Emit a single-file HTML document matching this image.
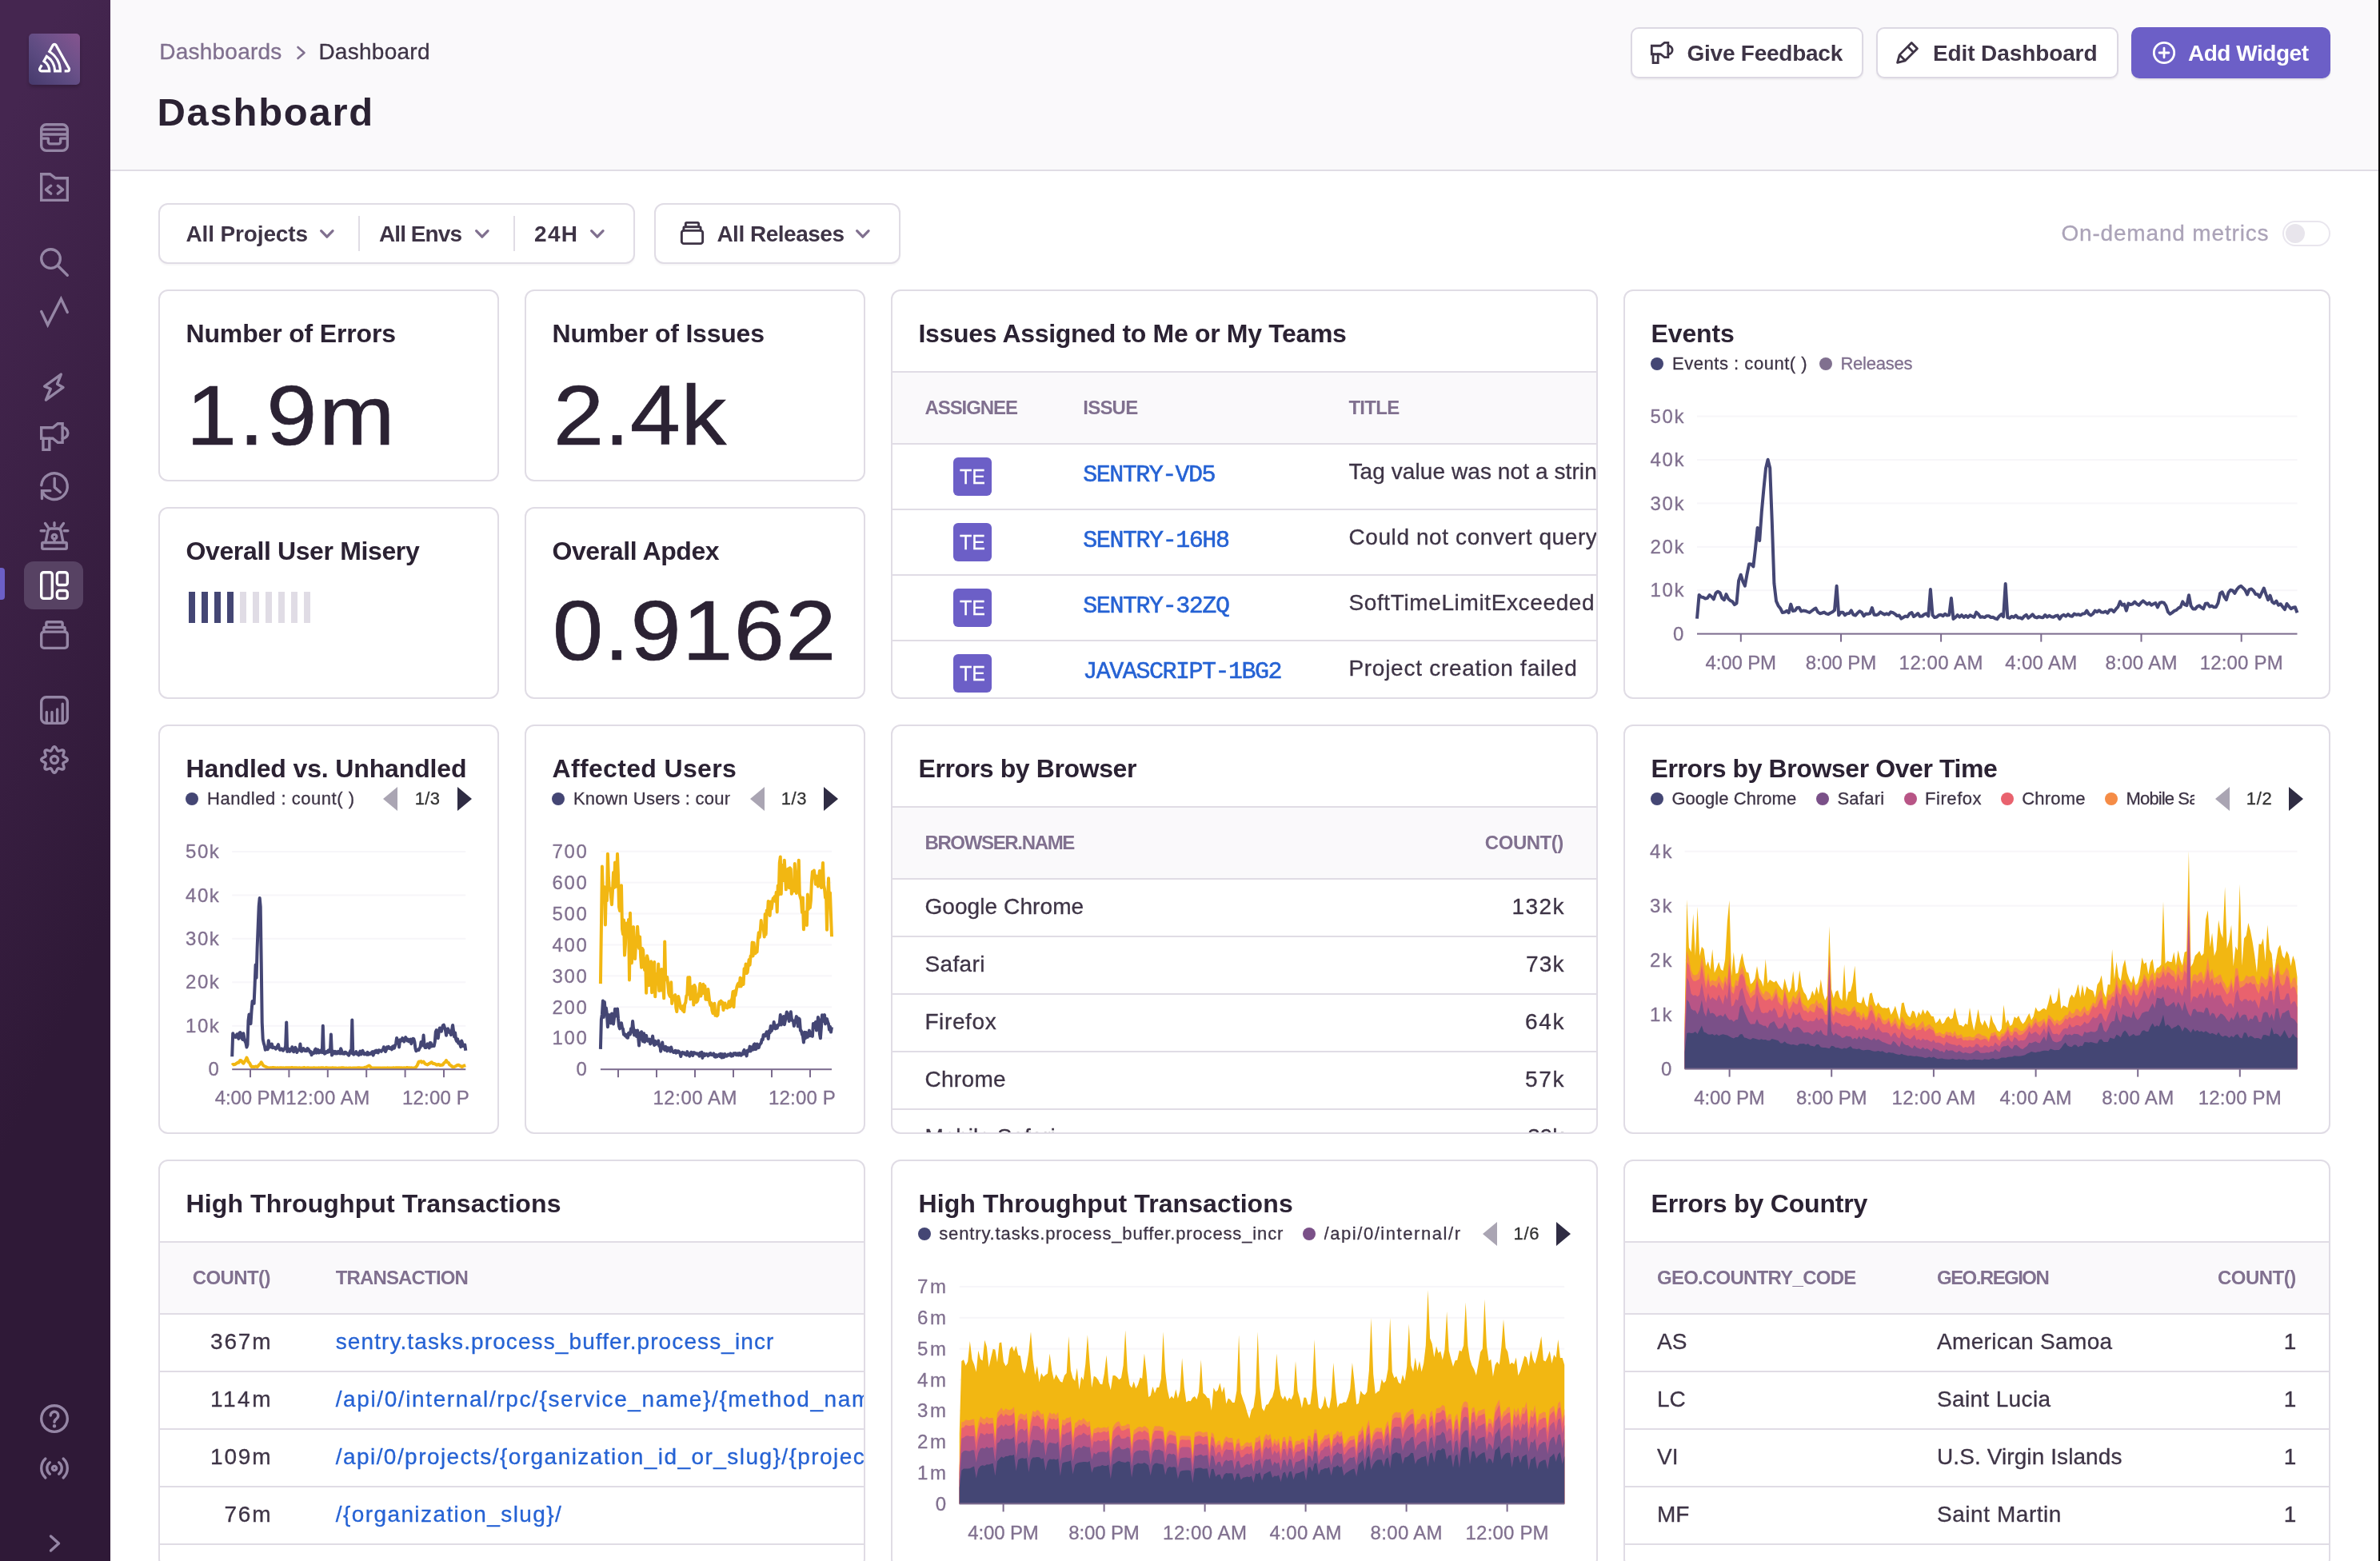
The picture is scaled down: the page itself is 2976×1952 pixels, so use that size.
<!DOCTYPE html><html lang="en"><head><meta charset="utf-8"><title>Dashboard</title><style>
*{margin:0;padding:0;box-sizing:content-box}
html,body{width:2976px;height:1952px;overflow:hidden;background:#fff}
body{font-family:"Liberation Sans",sans-serif;position:relative;-webkit-font-smoothing:antialiased}
.t{position:absolute;white-space:nowrap;line-height:1}
.big{-webkit-text-stroke:.7px #2b2233}
.r{-webkit-text-stroke:.3px}
.m{-webkit-text-stroke:.55px}
.ic{position:absolute;overflow:visible}
.chart{position:absolute}
.sidebar{position:absolute;left:0;top:0;width:138px;height:1952px;background:linear-gradient(294.17deg,#2f1937 35.57%,#452650 92.42%)}
.hdr{will-change:transform;position:absolute;left:138px;top:0;width:2836px;height:212px;background:#faf9fb;border-bottom:2px solid #e0dce5}
.card{position:absolute;box-sizing:border-box;border:2px solid #e0dce5;border-radius:12px;background:#fff;overflow:hidden}
main{position:absolute;left:0;top:0;width:2976px;height:1952px;will-change:transform}
.edge{position:absolute;left:2974px;top:0;width:2px;height:1952px;background:#000}
</style></head><body><nav class="sidebar"><div class="logo" style="position:absolute;left:36px;top:42px;width:64px;height:64px;border-radius:5px;background:linear-gradient(225deg,#85548f 0%,#6c5189 38%,#5b4a80 62%,#463a6c 100%);box-shadow:0 3px 4px rgba(0,0,0,.2);"><svg style="position:absolute;left:12px;top:10.2px" width="40.2" height="40.2" viewBox="0 0 16 16"><path fill="#fff" d="M15.8,14.57a1.53,1.53,0,0,0,0-1.52L9.28,1.43a1.46,1.46,0,0,0-2.56,0L4.61,5.18l.54.32A10.43,10.43,0,0,1,8.92,9.39a10.84,10.84,0,0,1,1.37,4.67H8.81a9.29,9.29,0,0,0-1.16-3.91A9,9,0,0,0,4.41,6.81L3.88,6.5,1.91,10l.53.32a5.12,5.12,0,0,1,2.42,3.73H1.48a.25.25,0,0,1-.21-.12.24.24,0,0,1,0-.25L2.21,12a3.32,3.32,0,0,0-1.07-.63L.2,13.05a1.53,1.53,0,0,0,0,1.52,1.46,1.46,0,0,0,1.28.76H6.13V14.7a6.55,6.55,0,0,0-.82-3.16,6.31,6.31,0,0,0-1.73-2l.74-1.32a7.85,7.85,0,0,1,2.26,2.53,8,8,0,0,1,1,3.92v.63h3.94V14.7A12.14,12.14,0,0,0,10,8.75a11.8,11.8,0,0,0-3.7-4l1.5-2.67a.24.24,0,0,1,.42,0l6.52,11.63a.24.24,0,0,1,0,.25.24.24,0,0,1-.21.12H13c0,.43,0,.85,0,1.27h1.53a1.46,1.46,0,0,0,1.28-.76"/></svg></div><div class="" style="position:absolute;left:0px;top:710px;width:6px;height:40px;background:#6c5fc7;border-radius:0 4px 4px 0;"></div><div class="" style="position:absolute;left:30px;top:702px;width:74px;height:60px;background:#574263;border-radius:12px;"></div><svg class="ic" style="left:50px;top:154px" width="36" height="36" viewBox="0 0 16 16" fill="none" stroke="#9586a5" stroke-width="1.5" stroke-linecap="round" stroke-linejoin="round"><rect x=".75" y=".75" width="14.5" height="14.5" rx="2.75"/><path d="M.75 3.5H15.25M.75 6.2H15.25M.75 8.5H4.6V10.4a1.1 1.1 0 0 0 1.1 1.1H10.3a1.1 1.1 0 0 0 1.1-1.1V8.5H15.25"/></svg><svg class="ic" style="left:50px;top:216px" width="36" height="36" viewBox="0 0 16 16" fill="none" stroke="#9586a5" stroke-width="1.5" stroke-linecap="round" stroke-linejoin="round"><path d="M.75.75H5.6L8.6 3H15.25V15.25H.75Z" stroke-linejoin="miter"/><path d="M6.1 7.2L3.3 9.4L6.1 11.6M9.9 7.2L12.7 9.4L9.9 11.6"/></svg><svg class="ic" style="left:50px;top:310px" width="36" height="36" viewBox="0 0 16 16" fill="none" stroke="#9586a5" stroke-width="1.5" stroke-linecap="round" stroke-linejoin="round"><circle cx="6" cy="6" r="5.25"/><path d="M10 10L15.25 15.25"/></svg><svg class="ic" style="left:50px;top:372px" width="36" height="36" viewBox="0 0 16 16" fill="none" stroke="#9586a5" stroke-width="1.5" stroke-linecap="round" stroke-linejoin="round"><path d="M.75 7.75L4.3 15.25L11.7.75L15.25 8.25" stroke-linejoin="miter"/></svg><svg class="ic" style="left:50px;top:466px" width="36" height="36" viewBox="0 0 16 16" fill="none" stroke="#9586a5" stroke-width="1.5" stroke-linecap="round" stroke-linejoin="round"><path d="M11.7.9L2.5 7.6L5.9 9L3.3 15.2L12.9 8.2L9.6 6.3Z"/></svg><svg class="ic" style="left:50px;top:528px" width="36" height="36" viewBox="0 0 16 16" fill="none" stroke="#9586a5" stroke-width="1.5" stroke-linecap="round" stroke-linejoin="round"><path d="M.75 3H7.1L9.9.75H12.5V11.25H9.9L7.1 9H.75Z" stroke-linejoin="miter"/><path d="M1.75 9V15.25H5.25V9" stroke-linejoin="miter"/><path d="M12.5 3A3 3 0 0 1 12.5 9"/></svg><svg class="ic" style="left:50px;top:590px" width="36" height="36" viewBox="0 0 16 16" fill="none" stroke="#9586a5" stroke-width="1.5" stroke-linecap="round" stroke-linejoin="round"><path d="M.77 7.5A7.25 7.25 0 1 1 1.2 10.6"/><path d="M5.7 10.5H1.1V14.9" stroke-linejoin="miter"/><path d="M8.1 3.6V8.6L11.3 11.3"/></svg><svg class="ic" style="left:50px;top:652px" width="36" height="36" viewBox="0 0 16 16" fill="none" stroke="#9586a5" stroke-width="1.5" stroke-linecap="round" stroke-linejoin="round"><rect x="1.2" y="11.75" width="13.6" height="3.5" rx=".6"/><path d="M3.1 11.75L4.3 5.6A2 2 0 0 1 6.2 4H9.8A2 2 0 0 1 11.7 5.6L12.9 11.75"/><circle cx="8" cy="8.5" r="1.25"/><path d="M8 9.8V11.75M8 .75V2.4M2.9 1.1L4.4 3.2M13.1 1.1L11.6 3.2M.5 5.2H2.6M13.4 5.2H15.5"/></svg><svg class="ic" style="left:50px;top:714px" width="36" height="36" viewBox="0 0 16 16" fill="none" stroke="#fff" stroke-width="1.5" stroke-linecap="round" stroke-linejoin="round"><rect x=".75" y=".75" width="6.05" height="14.5" rx="1.3"/><rect x="9.5" y=".75" width="5.75" height="7.05" rx="1.3"/><rect x="9.5" y="10.9" width="5.75" height="4.35" rx="1.3"/></svg><svg class="ic" style="left:50px;top:776px" width="36" height="36" viewBox="0 0 16 16" fill="none" stroke="#9586a5" stroke-width="1.5" stroke-linecap="round" stroke-linejoin="round"><rect x=".75" y="6.25" width="14.5" height="9" rx="1.5"/><path d="M2.15 6.25V4.5a.75.75 0 0 1 .75-.75H13.1a.75.75 0 0 1 .75.75V6.25M3.5 3.75V1.5a.75.75 0 0 1 .75-.75H11.75a.75.75 0 0 1 .75.75V3.75"/></svg><svg class="ic" style="left:50px;top:870px" width="36" height="36" viewBox="0 0 16 16" fill="none" stroke="#9586a5" stroke-width="1.5" stroke-linecap="round" stroke-linejoin="round"><rect x=".75" y=".75" width="14.5" height="14.5" rx="2.75"/><path d="M3.7 9.1V15M6.65 9.1V15M9.6 7.5V15M12.55 4.5V15"/></svg><svg class="ic" style="left:50px;top:932px" width="36" height="36" viewBox="0 0 16 16" fill="none" stroke="#9586a5" stroke-width="1.5" stroke-linecap="round" stroke-linejoin="round"><path d="M8.00 0.75L8.28 0.81L8.55 0.98L8.80 1.25L9.02 1.59L9.20 1.97L9.37 2.30L9.52 2.61L9.67 2.87L9.82 3.06L10.00 3.18L10.20 3.22L10.45 3.19L10.74 3.11L11.06 3.00L11.42 2.89L11.81 2.75L12.21 2.66L12.57 2.65L12.88 2.72L13.13 2.87L13.28 3.12L13.35 3.43L13.34 3.79L13.25 4.19L13.11 4.58L13.00 4.94L12.89 5.26L12.81 5.55L12.78 5.80L12.82 6.00L12.94 6.18L13.13 6.33L13.39 6.48L13.70 6.63L14.03 6.80L14.41 6.98L14.75 7.20L15.02 7.45L15.19 7.72L15.25 8.00L15.19 8.28L15.02 8.55L14.75 8.80L14.41 9.02L14.03 9.20L13.70 9.37L13.39 9.52L13.13 9.67L12.94 9.82L12.82 10.00L12.78 10.20L12.81 10.45L12.89 10.74L13.00 11.06L13.11 11.42L13.25 11.81L13.34 12.21L13.35 12.57L13.28 12.88L13.13 13.13L12.88 13.28L12.57 13.35L12.21 13.34L11.81 13.25L11.42 13.11L11.06 13.00L10.74 12.89L10.45 12.81L10.20 12.78L10.00 12.82L9.82 12.94L9.67 13.13L9.52 13.39L9.37 13.70L9.20 14.03L9.02 14.41L8.80 14.75L8.55 15.02L8.28 15.19L8.00 15.25L7.72 15.19L7.45 15.02L7.20 14.75L6.98 14.41L6.80 14.03L6.63 13.70L6.48 13.39L6.33 13.13L6.18 12.94L6.00 12.82L5.80 12.78L5.55 12.81L5.26 12.89L4.94 13.00L4.58 13.11L4.19 13.25L3.79 13.34L3.43 13.35L3.12 13.28L2.87 13.13L2.72 12.88L2.65 12.57L2.66 12.21L2.75 11.81L2.89 11.42L3.00 11.06L3.11 10.74L3.19 10.45L3.22 10.20L3.18 10.00L3.06 9.82L2.87 9.67L2.61 9.52L2.30 9.37L1.97 9.20L1.59 9.02L1.25 8.80L0.98 8.55L0.81 8.28L0.75 8.00L0.81 7.72L0.98 7.45L1.25 7.20L1.59 6.98L1.97 6.80L2.30 6.63L2.61 6.48L2.87 6.33L3.06 6.18L3.18 6.00L3.22 5.80L3.19 5.55L3.11 5.26L3.00 4.94L2.89 4.58L2.75 4.19L2.66 3.79L2.65 3.43L2.72 3.12L2.87 2.87L3.12 2.72L3.43 2.65L3.79 2.66L4.19 2.75L4.58 2.89L4.94 3.00L5.26 3.11L5.55 3.19L5.80 3.22L6.00 3.18L6.18 3.06L6.33 2.87L6.48 2.61L6.63 2.30L6.80 1.97L6.98 1.59L7.20 1.25L7.45 0.98L7.72 0.81Z"/><circle cx="8" cy="8" r="2"/></svg><svg class="ic" style="left:50px;top:1756px" width="36" height="36" viewBox="0 0 16 16" fill="none" stroke="#9586a5" stroke-width="1.5" stroke-linecap="round" stroke-linejoin="round"><circle cx="8" cy="8" r="7.25"/><path d="M5.9 6.2A2.1 2.1 0 1 1 9.3 7.9C8.5 8.5 8 8.9 8 9.9"/><circle cx="8" cy="12.1" r=".55" fill="#9586a5" stroke-width=".9"/></svg><svg class="ic" style="left:50px;top:1818px" width="36" height="36" viewBox="0 0 16 16" fill="none" stroke="#9586a5" stroke-width="1.5" stroke-linecap="round" stroke-linejoin="round"><circle cx="8" cy="8" r="1.15"/><path d="M3.06 13.30A7.25 7.25 0 0 1 3.06 2.70M12.94 2.70A7.25 7.25 0 0 1 12.94 13.30M5.48 11.23A4.1 4.1 0 0 1 5.48 4.77M10.52 4.77A4.1 4.1 0 0 1 10.52 11.23"/></svg><svg class="ic" style="left:58px;top:1916px" width="22" height="28" viewBox="0 0 22 28" fill="none" stroke="#9586a5" stroke-width="3.4" stroke-linecap="round" stroke-linejoin="round"><path d="M5.5 5L15.5 14L5.5 23"/></svg></nav><header class="hdr"><div class="t r" style="left:61.3px;top:51px;font-size:28px;color:#80708f;letter-spacing:0.22px;">Dashboards</div><svg class="ic" style="left:231px;top:55px" width="16" height="22" viewBox="0 0 16 22" fill="none" stroke="#80708f" stroke-width="2.6" stroke-linecap="round" stroke-linejoin="round"><path d="M3.5 4L11.5 11L3.5 18"/></svg><div class="t r" style="left:260.4px;top:51px;font-size:28px;color:#3e3446;letter-spacing:0.26px;">Dashboard</div><div class="t h1" style="left:58.4px;top:116px;font-size:49px;color:#2b2233;font-weight:700;letter-spacing:1.74px;">Dashboard</div><div class="btn" style="position:absolute;left:1901px;top:34px;width:291px;height:64px;border:2px solid #dcd8e3;border-radius:10px;background:#fff;box-shadow:0 2px 2px rgba(43,34,51,.06);box-sizing:border-box;"></div><svg class="ic" style="left:1926px;top:52px" width="28" height="28" viewBox="0 0 16 16" fill="none" stroke="#3e3446" stroke-width="1.6" stroke-linecap="round" stroke-linejoin="round"><path d="M.75 3H7.1L9.9.75H12.5V11.25H9.9L7.1 9H.75Z" stroke-linejoin="miter"/><path d="M1.75 9V15.25H5.25V9" stroke-linejoin="miter"/><path d="M12.5 3A3 3 0 0 1 12.5 9"/></svg><div class="t" style="left:1971.5px;top:53px;font-size:28px;color:#3e3446;font-weight:700;letter-spacing:-0.24px;">Give Feedback</div><div class="btn" style="position:absolute;left:2208px;top:34px;width:303px;height:64px;border:2px solid #dcd8e3;border-radius:10px;background:#fff;box-shadow:0 2px 2px rgba(43,34,51,.06);box-sizing:border-box;"></div><svg class="ic" style="left:2233px;top:52px" width="28" height="28" viewBox="0 0 16 16" fill="none" stroke="#3e3446" stroke-width="1.6" stroke-linecap="round" stroke-linejoin="round"><path d="M11 .9L15.1 5L6.5 13.6L.9 15.1L2.4 9.5Z M8.3 3.6L12.4 7.7M2.4 9.5L6.5 13.6"/></svg><div class="t" style="left:2279.0px;top:53px;font-size:28px;color:#3e3446;font-weight:700;letter-spacing:-0.11px;">Edit Dashboard</div><div class="btn primary" style="position:absolute;left:2527px;top:34px;width:249px;height:64px;border-radius:10px;background:#6c5fc7;box-shadow:0 2px 2px rgba(43,34,51,.1);"></div><svg class="ic" style="left:2554px;top:52px" width="28" height="28" viewBox="0 0 16 16" fill="none" stroke="#fff" stroke-width="1.6" stroke-linecap="round" stroke-linejoin="round"><circle cx="8" cy="8" r="7.25"/><path d="M8 4.6V11.4M4.6 8H11.4"/></svg><div class="t" style="left:2598.0px;top:53px;font-size:28px;color:#fff;font-weight:700;letter-spacing:-0.48px;">Add Widget</div></header><main><div class="filter" style="position:absolute;left:198px;top:254px;width:596px;height:76px;border:2px solid #e0dce5;border-radius:12px;background:#fff;box-shadow:0 2px 2px rgba(43,34,51,.04);box-sizing:border-box;"></div><div class="" style="position:absolute;left:448px;top:270px;width:2px;height:44px;background:#e0dce5;"></div><div class="" style="position:absolute;left:642px;top:270px;width:2px;height:44px;background:#e0dce5;"></div><div class="t" style="left:232.5px;top:279px;font-size:28px;color:#3e3446;font-weight:700;letter-spacing:-0.14px;">All Projects</div><svg class="ic" style="left:399.7px;top:287.1px" width="17.7" height="10.8" viewBox="-1.6 -1.6 17.7 10.8" fill="none" stroke="#80708f" stroke-width="3.2" stroke-linecap="round" stroke-linejoin="round"><path d="M0 0L7.25 7.6L14.5 0"/></svg><div class="t" style="left:474.0px;top:279px;font-size:28px;color:#3e3446;font-weight:700;letter-spacing:-0.93px;">All Envs</div><svg class="ic" style="left:594.0px;top:287.1px" width="17.7" height="10.8" viewBox="-1.6 -1.6 17.7 10.8" fill="none" stroke="#80708f" stroke-width="3.2" stroke-linecap="round" stroke-linejoin="round"><path d="M0 0L7.25 7.6L14.5 0"/></svg><div class="t" style="left:668.0px;top:279px;font-size:28px;color:#3e3446;font-weight:700;letter-spacing:1.31px;">24H</div><svg class="ic" style="left:737.5px;top:287.1px" width="17.7" height="10.8" viewBox="-1.6 -1.6 17.7 10.8" fill="none" stroke="#80708f" stroke-width="3.2" stroke-linecap="round" stroke-linejoin="round"><path d="M0 0L7.25 7.6L14.5 0"/></svg><div class="filter" style="position:absolute;left:818px;top:254px;width:308px;height:76px;border:2px solid #e0dce5;border-radius:12px;background:#fff;box-shadow:0 2px 2px rgba(43,34,51,.04);box-sizing:border-box;"></div><svg class="ic" style="left:851.4px;top:277px" width="29" height="29" viewBox="0 0 16 16" fill="none" stroke="#3e3446" stroke-width="1.6" stroke-linecap="round" stroke-linejoin="round"><rect x=".75" y="6.25" width="14.5" height="9" rx="1.5"/><path d="M2.15 6.25V4.5a.75.75 0 0 1 .75-.75H13.1a.75.75 0 0 1 .75.75V6.25M3.5 3.75V1.5a.75.75 0 0 1 .75-.75H11.75a.75.75 0 0 1 .75.75V3.75"/></svg><div class="t" style="left:896.4px;top:279px;font-size:28px;color:#3e3446;font-weight:700;letter-spacing:-0.49px;">All Releases</div><svg class="ic" style="left:1069.5px;top:287.1px" width="17.7" height="10.8" viewBox="-1.6 -1.6 17.7 10.8" fill="none" stroke="#80708f" stroke-width="3.2" stroke-linecap="round" stroke-linejoin="round"><path d="M0 0L7.25 7.6L14.5 0"/></svg><div class="t r" style="left:2577.4px;top:278px;font-size:28px;color:#aba3b8;letter-spacing:0.83px;">On-demand metrics</div><div class="toggle" style="position:absolute;left:2854px;top:276px;width:60px;height:32px;border:2px solid #e9e6ee;border-radius:16px;box-sizing:border-box;background:#fff;"><div style="position:absolute;left:2px;top:2px;width:24px;height:24px;border-radius:12px;background:#e8e5ec"></div></div><section class="card" style="left:198px;top:362px;width:426px;height:240px"><div class="t ttl" style="left:32.5px;top:37px;font-size:32px;color:#2b2233;font-weight:700;letter-spacing:-0.16px;">Number of Errors</div><div class="t big" style="left:32.9px;top:102px;font-size:106px;color:#2b2233;letter-spacing:2.60px;transform:scaleX(1.07);transform-origin:0 0;">1.9m</div></section><section class="card" style="left:656px;top:362px;width:426px;height:240px"><div class="t ttl" style="left:32.5px;top:37px;font-size:32px;color:#2b2233;font-weight:700;letter-spacing:-0.20px;">Number of Issues</div><div class="t big" style="left:34.0px;top:102px;font-size:106px;color:#2b2233;letter-spacing:0.60px;transform:scaleX(1.07);transform-origin:0 0;">2.4k</div></section><section class="card" style="left:1114px;top:362px;width:884px;height:512px"><div class="t ttl" style="left:32.5px;top:37px;font-size:32px;color:#2b2233;font-weight:700;letter-spacing:-0.33px;">Issues Assigned to Me or My Teams</div><div class="" style="position:absolute;left:0px;top:100px;width:880px;height:2px;background:#e0dce5;"></div><div class="" style="position:absolute;left:0px;top:102px;width:880px;height:88px;background:#faf9fb;"></div><div class="" style="position:absolute;left:0px;top:190px;width:880px;height:2px;background:#e0dce5;"></div><div class="t" style="left:40.4px;top:134px;font-size:24px;color:#80708f;font-weight:700;letter-spacing:-1.05px;">ASSIGNEE</div><div class="t" style="left:238.3px;top:134px;font-size:24px;color:#80708f;font-weight:700;letter-spacing:-0.79px;">ISSUE</div><div class="t" style="left:570.4px;top:134px;font-size:24px;color:#80708f;font-weight:700;letter-spacing:-0.72px;">TITLE</div><div class="" style="position:absolute;left:0px;top:272px;width:880px;height:2px;background:#e0dce5;"></div><div class="" style="position:absolute;left:0px;top:354px;width:880px;height:2px;background:#e0dce5;"></div><div class="" style="position:absolute;left:0px;top:436px;width:880px;height:2px;background:#e0dce5;"></div><div class="" style="position:absolute;left:0px;top:518px;width:880px;height:2px;background:#e0dce5;"></div><div class="av" style="position:absolute;left:76px;top:208px;width:48px;height:48px;border-radius:6px;background:#6c5fc7;"></div><div class="t r" style="left:84.0px;top:220px;font-size:25px;color:#fff;">TE</div><div class="t m" style="left:238.3px;top:215px;font-size:30px;color:#2562d4;font-family:'Liberation Mono',monospace;letter-spacing:-1.53px;">SENTRY-VD5</div><div class="t r" style="left:570.4px;top:212px;font-size:28px;color:#3e3446;letter-spacing:0.09px;">Tag value was not a string</div><div class="av" style="position:absolute;left:76px;top:290px;width:48px;height:48px;border-radius:6px;background:#6c5fc7;"></div><div class="t r" style="left:84.0px;top:302px;font-size:25px;color:#fff;">TE</div><div class="t m" style="left:238.3px;top:297px;font-size:30px;color:#2562d4;font-family:'Liberation Mono',monospace;letter-spacing:-1.44px;">SENTRY-16H8</div><div class="t r" style="left:570.4px;top:294px;font-size:28px;color:#3e3446;letter-spacing:0.60px;">Could not convert query to</div><div class="av" style="position:absolute;left:76px;top:372px;width:48px;height:48px;border-radius:6px;background:#6c5fc7;"></div><div class="t r" style="left:84.0px;top:384px;font-size:25px;color:#fff;">TE</div><div class="t m" style="left:238.3px;top:379px;font-size:30px;color:#2562d4;font-family:'Liberation Mono',monospace;letter-spacing:-1.44px;">SENTRY-32ZQ</div><div class="t r" style="left:570.4px;top:376px;font-size:28px;color:#3e3446;letter-spacing:0.63px;">SoftTimeLimitExceeded</div><div class="av" style="position:absolute;left:76px;top:454px;width:48px;height:48px;border-radius:6px;background:#6c5fc7;"></div><div class="t r" style="left:84.0px;top:466px;font-size:25px;color:#fff;">TE</div><div class="t m" style="left:238.3px;top:461px;font-size:30px;color:#2562d4;font-family:'Liberation Mono',monospace;letter-spacing:-1.48px;">JAVASCRIPT-1BG2</div><div class="t r" style="left:570.4px;top:458px;font-size:28px;color:#3e3446;letter-spacing:0.73px;">Project creation failed</div></section><section class="card" style="left:2030px;top:362px;width:884px;height:512px"><div class="t ttl" style="left:32.5px;top:37px;font-size:32px;color:#2b2233;font-weight:700;letter-spacing:-0.13px;">Events</div><div class="" style="position:absolute;left:31.699999999999818px;top:83px;width:16px;height:16px;border-radius:8px;background:#444674;"></div><div class="t r" style="left:59.0px;top:80px;font-size:22px;color:#3e3446;letter-spacing:0.53px;">Events : count( )</div><div class="" style="position:absolute;left:242.69999999999982px;top:83px;width:16px;height:16px;border-radius:8px;background:#80708f;"></div><div class="t r" style="left:269.4px;top:80px;font-size:22px;color:#80708f;letter-spacing:-0.23px;">Releases</div><svg class="chart" style="left:0;top:0" width="880" height="508" viewBox="2032 364 880 508"><rect x="2122" y="737.2" width="750.5" height="2" fill="#f7f6f9"/><rect x="2122" y="682.8" width="750.5" height="2" fill="#f7f6f9"/><rect x="2122" y="628.4" width="750.5" height="2" fill="#f7f6f9"/><rect x="2122" y="574.0" width="750.5" height="2" fill="#f7f6f9"/><rect x="2122" y="519.6" width="750.5" height="2" fill="#f7f6f9"/><path d="M2122.0 773.6 L2124.6 744.0 L2127.2 746.6 L2129.8 747.0 L2132.4 748.6 L2135.0 747.9 L2137.6 744.0 L2140.2 746.2 L2142.8 749.3 L2145.5 741.7 L2148.1 739.7 L2150.7 741.3 L2153.3 748.0 L2155.9 750.2 L2158.5 743.1 L2161.1 748.7 L2163.7 751.1 L2166.3 752.3 L2168.9 756.2 L2171.5 754.3 L2174.1 726.1 L2176.7 718.7 L2179.3 727.1 L2181.9 732.7 L2184.5 718.2 L2187.1 705.3 L2189.8 705.4 L2192.4 708.5 L2195.0 686.0 L2197.6 659.9 L2200.2 676.1 L2202.8 640.0 L2205.4 611.5 L2208.0 585.6 L2210.6 574.8 L2213.2 585.2 L2215.8 652.8 L2218.4 729.5 L2221.0 751.6 L2223.6 757.4 L2226.2 760.7 L2228.8 766.0 L2231.4 765.6 L2234.1 763.8 L2236.7 766.2 L2239.3 755.6 L2241.9 764.1 L2244.5 763.6 L2247.1 760.0 L2249.7 759.8 L2252.3 764.4 L2254.9 763.6 L2257.5 763.9 L2260.1 765.0 L2262.7 766.0 L2265.3 764.0 L2267.9 762.1 L2270.5 760.6 L2273.1 765.4 L2275.7 767.2 L2278.4 766.5 L2281.0 765.6 L2283.6 767.4 L2286.2 768.0 L2288.8 766.5 L2291.4 765.2 L2294.0 763.0 L2296.6 732.8 L2299.2 769.3 L2301.8 765.8 L2304.4 765.8 L2307.0 769.2 L2309.6 767.2 L2312.2 767.1 L2314.8 763.4 L2317.4 768.7 L2320.0 769.6 L2322.7 766.6 L2325.3 764.2 L2327.9 765.7 L2330.5 770.3 L2333.1 767.6 L2335.7 767.8 L2338.3 767.0 L2340.9 760.0 L2343.5 768.8 L2346.1 769.1 L2348.7 768.1 L2351.3 765.3 L2353.9 767.1 L2356.5 768.4 L2359.1 767.3 L2361.7 768.5 L2364.3 765.3 L2367.0 766.1 L2369.6 767.9 L2372.2 770.1 L2374.8 769.5 L2377.4 773.6 L2380.0 772.1 L2382.6 770.6 L2385.2 771.2 L2387.8 767.3 L2390.4 766.0 L2393.0 771.0 L2395.6 769.3 L2398.2 767.0 L2400.8 770.8 L2403.4 770.6 L2406.0 768.4 L2408.6 767.3 L2411.3 770.4 L2413.9 737.1 L2416.5 769.2 L2419.1 772.1 L2421.7 771.5 L2424.3 769.3 L2426.9 768.8 L2429.5 770.3 L2432.1 767.7 L2434.7 769.6 L2437.3 769.0 L2439.9 748.0 L2442.5 774.0 L2445.1 772.0 L2447.7 769.1 L2450.3 771.6 L2452.9 769.2 L2455.6 771.9 L2458.2 769.8 L2460.8 771.9 L2463.4 769.3 L2466.0 770.7 L2468.6 771.8 L2471.2 765.6 L2473.8 768.0 L2476.4 771.8 L2479.0 771.3 L2481.6 772.1 L2484.2 770.2 L2486.8 770.2 L2489.4 772.0 L2492.0 771.7 L2494.6 773.3 L2497.2 774.2 L2499.9 770.5 L2502.5 768.2 L2505.1 771.2 L2507.7 730.0 L2510.3 772.1 L2512.9 772.9 L2515.5 770.8 L2518.1 771.9 L2520.7 769.5 L2523.3 772.4 L2525.9 772.4 L2528.5 773.7 L2531.1 770.6 L2533.7 768.8 L2536.3 772.8 L2538.9 770.7 L2541.6 768.3 L2544.2 771.6 L2546.8 772.4 L2549.4 771.1 L2552.0 771.9 L2554.6 772.2 L2557.2 769.0 L2559.8 771.7 L2562.4 769.8 L2565.0 771.2 L2567.6 771.7 L2570.2 770.3 L2572.8 769.6 L2575.4 774.0 L2578.0 770.2 L2580.6 768.8 L2583.2 770.6 L2585.9 768.1 L2588.5 770.3 L2591.1 770.8 L2593.7 767.6 L2596.3 768.8 L2598.9 768.2 L2601.5 769.3 L2604.1 767.6 L2606.7 767.3 L2609.3 763.6 L2611.9 767.9 L2614.5 769.5 L2617.1 767.5 L2619.7 763.7 L2622.3 765.2 L2624.9 763.2 L2627.5 765.6 L2630.2 765.7 L2632.8 764.5 L2635.4 766.7 L2638.0 762.8 L2640.6 762.6 L2643.2 765.1 L2645.8 761.7 L2648.4 758.9 L2651.0 752.2 L2653.6 756.8 L2656.2 755.6 L2658.8 763.6 L2661.4 754.6 L2664.0 756.1 L2666.6 755.3 L2669.2 752.5 L2671.8 755.1 L2674.5 756.9 L2677.1 753.8 L2679.7 751.4 L2682.3 753.5 L2684.9 755.6 L2687.5 753.9 L2690.1 756.7 L2692.7 755.3 L2695.3 754.0 L2697.9 759.5 L2700.5 754.0 L2703.1 753.1 L2705.7 753.7 L2708.3 757.4 L2710.9 765.1 L2713.5 767.8 L2716.1 766.1 L2718.8 763.9 L2721.4 762.9 L2724.0 760.4 L2726.6 759.1 L2729.2 752.4 L2731.8 756.2 L2734.4 757.1 L2737.0 744.2 L2739.6 757.6 L2742.2 761.4 L2744.8 761.6 L2747.4 758.6 L2750.0 757.3 L2752.6 759.7 L2755.2 761.4 L2757.8 754.7 L2760.4 754.6 L2763.1 758.5 L2765.7 757.6 L2768.3 759.2 L2770.9 759.2 L2773.5 754.1 L2776.1 741.9 L2778.7 740.3 L2781.3 746.3 L2783.9 750.0 L2786.5 741.0 L2789.1 737.8 L2791.7 738.5 L2794.3 741.9 L2796.9 737.3 L2799.5 734.2 L2802.1 732.7 L2804.7 735.1 L2807.4 737.8 L2810.0 743.5 L2812.6 737.1 L2815.2 736.5 L2817.8 738.7 L2820.4 742.9 L2823.0 743.2 L2825.6 746.7 L2828.2 741.0 L2830.8 735.5 L2833.4 743.1 L2836.0 750.1 L2838.6 744.7 L2841.2 752.7 L2843.8 754.5 L2846.4 751.6 L2849.0 756.7 L2851.7 755.2 L2854.3 758.8 L2856.9 762.1 L2859.5 755.0 L2862.1 758.2 L2864.7 761.3 L2867.3 759.7 L2869.9 759.3 L2872.5 766.3" fill="none" stroke="#444674" stroke-width="4" stroke-linejoin="round" stroke-linecap="butt"/><rect x="2122" y="791.6" width="750.5" height="2" fill="#7c6b8e"/><rect x="2175.8" y="792.6" width="2" height="10" fill="#7c6b8e"/><rect x="2301.0" y="792.6" width="2" height="10" fill="#7c6b8e"/><rect x="2426.1" y="792.6" width="2" height="10" fill="#7c6b8e"/><rect x="2551.3" y="792.6" width="2" height="10" fill="#7c6b8e"/><rect x="2676.5" y="792.6" width="2" height="10" fill="#7c6b8e"/><rect x="2801.7" y="792.6" width="2" height="10" fill="#7c6b8e"/></svg><div class="t r" style="left:60.1px;top:417px;font-size:24px;color:#80708f;">0</div><div class="t r" style="left:31.5px;top:362px;font-size:24px;color:#80708f;letter-spacing:1.64px;">10k</div><div class="t r" style="left:31.5px;top:308px;font-size:24px;color:#80708f;letter-spacing:1.64px;">20k</div><div class="t r" style="left:31.5px;top:254px;font-size:24px;color:#80708f;letter-spacing:1.64px;">30k</div><div class="t r" style="left:31.5px;top:199px;font-size:24px;color:#80708f;letter-spacing:1.64px;">40k</div><div class="t r" style="left:31.5px;top:145px;font-size:24px;color:#80708f;letter-spacing:1.64px;">50k</div><div class="t r" style="left:100.6px;top:453px;font-size:24px;color:#80708f;letter-spacing:-0.15px;">4:00 PM</div><div class="t r" style="left:225.7px;top:453px;font-size:24px;color:#80708f;letter-spacing:-0.15px;">8:00 PM</div><div class="t r" style="left:342.6px;top:453px;font-size:24px;color:#80708f;letter-spacing:0.51px;">12:00 AM</div><div class="t r" style="left:475.3px;top:453px;font-size:24px;color:#80708f;letter-spacing:0.32px;">4:00 AM</div><div class="t r" style="left:600.5px;top:453px;font-size:24px;color:#80708f;letter-spacing:0.32px;">8:00 AM</div><div class="t r" style="left:718.7px;top:453px;font-size:24px;color:#80708f;letter-spacing:0.18px;">12:00 PM</div></section><section class="card" style="left:198px;top:634px;width:426px;height:240px"><div class="t ttl" style="left:32.5px;top:37px;font-size:32px;color:#2b2233;font-weight:700;letter-spacing:-0.37px;">Overall User Misery</div><div class="" style="position:absolute;left:36px;top:104px;width:8px;height:39px;background:#444674;"></div><div class="" style="position:absolute;left:52px;top:104px;width:8px;height:39px;background:#444674;"></div><div class="" style="position:absolute;left:68px;top:104px;width:8px;height:39px;background:#444674;"></div><div class="" style="position:absolute;left:84px;top:104px;width:8px;height:39px;background:#444674;"></div><div class="" style="position:absolute;left:100px;top:104px;width:8px;height:39px;background:#e0dce5;"></div><div class="" style="position:absolute;left:116px;top:104px;width:8px;height:39px;background:#e0dce5;"></div><div class="" style="position:absolute;left:132px;top:104px;width:8px;height:39px;background:#e0dce5;"></div><div class="" style="position:absolute;left:148px;top:104px;width:8px;height:39px;background:#e0dce5;"></div><div class="" style="position:absolute;left:164px;top:104px;width:8px;height:39px;background:#e0dce5;"></div><div class="" style="position:absolute;left:180px;top:104px;width:8px;height:39px;background:#e0dce5;"></div></section><section class="card" style="left:656px;top:634px;width:426px;height:240px"><div class="t ttl" style="left:32.5px;top:37px;font-size:32px;color:#2b2233;font-weight:700;letter-spacing:-0.41px;">Overall Apdex</div><div class="t big" style="left:32.8px;top:99px;font-size:106px;color:#2b2233;letter-spacing:1.40px;transform:scaleX(1.07);transform-origin:0 0;">0.9162</div></section><section class="card" style="left:198px;top:906px;width:426px;height:512px"><div class="t ttl" style="left:32.5px;top:37px;font-size:32px;color:#2b2233;font-weight:700;letter-spacing:-0.14px;">Handled vs. Unhandled</div><div class="" style="position:absolute;left:32.30000000000001px;top:83px;width:16px;height:16px;border-radius:8px;background:#444674;"></div><div class="t r" style="left:59.0px;top:80px;font-size:22px;color:#3e3446;letter-spacing:0.54px;">Handled : count( )</div><svg class="ic" style="left:279.4px;top:76.0px" width="18" height="30" viewBox="0 0 18 30"><path d="M18 0V30L0 15Z" fill="#aaa5b3"/></svg><div class="t r" style="left:318.8px;top:80px;font-size:22px;color:#333;letter-spacing:0.30px;">1/3</div><svg class="ic" style="left:372.0px;top:76.0px" width="18" height="30" viewBox="0 0 18 30"><path d="M0 0V30L18 15Z" fill="#2f2c43"/></svg><svg class="chart" style="left:0;top:0" width="422" height="508" viewBox="200 908 422 508"><rect x="290.2" y="1281.8" width="292.1" height="2" fill="#f7f6f9"/><rect x="290.2" y="1227.3" width="292.1" height="2" fill="#f7f6f9"/><rect x="290.2" y="1172.8" width="292.1" height="2" fill="#f7f6f9"/><rect x="290.2" y="1118.4" width="292.1" height="2" fill="#f7f6f9"/><rect x="290.2" y="1064.0" width="292.1" height="2" fill="#f7f6f9"/><path d="M290.2 1321.3 L291.2 1292.3 L292.2 1294.8 L293.2 1295.2 L294.3 1297.0 L295.3 1296.8 L296.3 1293.2 L297.3 1295.9 L298.3 1298.9 L299.3 1292.0 L300.3 1291.0 L301.4 1292.5 L302.4 1298.5 L303.4 1299.8 L304.4 1292.2 L305.4 1298.6 L306.4 1302.1 L307.4 1304.0 L308.5 1309.5 L309.5 1306.3 L310.5 1276.2 L311.5 1268.4 L312.5 1276.0 L313.5 1280.1 L314.5 1264.6 L315.6 1251.9 L316.6 1251.9 L317.6 1254.8 L318.6 1232.4 L319.6 1206.6 L320.6 1222.7 L321.6 1186.3 L322.7 1158.3 L323.7 1133.3 L324.7 1122.9 L325.7 1133.9 L326.7 1202.6 L327.7 1278.5 L328.7 1299.4 L329.8 1304.6 L330.8 1307.6 L331.8 1312.8 L332.8 1312.0 L333.8 1309.9 L334.8 1312.1 L335.8 1301.2 L336.9 1309.7 L337.9 1309.4 L338.9 1305.7 L339.9 1305.5 L340.9 1310.3 L341.9 1309.4 L342.9 1309.7 L344.0 1310.8 L345.0 1311.7 L346.0 1309.6 L347.0 1307.9 L348.0 1306.2 L349.0 1311.0 L350.0 1312.9 L351.1 1312.2 L352.1 1311.3 L353.1 1313.1 L354.1 1313.7 L355.1 1312.2 L356.1 1310.9 L357.1 1308.7 L358.2 1278.4 L359.2 1315.0 L360.2 1311.5 L361.2 1311.6 L362.2 1314.9 L363.2 1312.9 L364.2 1312.9 L365.3 1309.2 L366.3 1314.4 L367.3 1315.2 L368.3 1312.4 L369.3 1309.9 L370.3 1311.3 L371.3 1316.0 L372.4 1313.2 L373.4 1313.4 L374.4 1312.7 L375.4 1305.6 L376.4 1314.3 L377.4 1314.7 L378.4 1313.7 L379.5 1311.0 L380.5 1313.0 L381.5 1314.1 L382.5 1312.8 L383.5 1314.1 L384.5 1311.1 L385.5 1311.9 L386.6 1313.5 L387.6 1315.8 L388.6 1315.2 L389.6 1319.2 L390.6 1317.7 L391.6 1316.2 L392.6 1316.9 L393.7 1313.0 L394.7 1311.7 L395.7 1316.6 L396.7 1314.8 L397.7 1312.7 L398.7 1316.5 L399.7 1316.1 L400.8 1314.0 L401.8 1313.0 L402.8 1316.2 L403.8 1282.8 L404.8 1314.8 L405.8 1317.6 L406.8 1317.2 L407.9 1315.2 L408.9 1314.6 L409.9 1315.8 L410.9 1313.3 L411.9 1315.2 L412.9 1314.6 L413.9 1293.5 L415.0 1319.6 L416.0 1317.7 L417.0 1314.8 L418.0 1317.3 L419.0 1314.8 L420.0 1317.5 L421.0 1315.3 L422.1 1317.3 L423.1 1314.9 L424.1 1316.3 L425.1 1317.4 L426.1 1311.2 L427.1 1313.8 L428.1 1317.5 L429.2 1317.0 L430.2 1317.8 L431.2 1315.7 L432.2 1315.7 L433.2 1317.5 L434.2 1317.2 L435.2 1318.8 L436.2 1319.7 L437.3 1316.1 L438.3 1313.8 L439.3 1316.7 L440.3 1275.5 L441.3 1317.7 L442.3 1318.6 L443.3 1316.5 L444.4 1317.5 L445.4 1315.0 L446.4 1318.1 L447.4 1318.1 L448.4 1319.4 L449.4 1316.4 L450.4 1314.5 L451.5 1318.4 L452.5 1316.3 L453.5 1313.9 L454.5 1317.2 L455.5 1318.3 L456.5 1317.2 L457.5 1318.1 L458.6 1318.7 L459.6 1315.8 L460.6 1318.8 L461.6 1317.2 L462.6 1318.1 L463.6 1317.9 L464.6 1316.0 L465.7 1315.2 L466.7 1319.6 L467.7 1315.8 L468.7 1314.4 L469.7 1316.1 L470.7 1313.6 L471.7 1315.9 L472.8 1316.4 L473.8 1313.2 L474.8 1314.3 L475.8 1313.8 L476.8 1314.8 L477.8 1313.2 L478.8 1312.9 L479.9 1309.2 L480.9 1313.5 L481.9 1315.0 L482.9 1313.0 L483.9 1309.4 L484.9 1310.9 L485.9 1308.8 L487.0 1311.1 L488.0 1311.2 L489.0 1310.2 L490.0 1312.3 L491.0 1308.4 L492.0 1308.3 L493.0 1310.7 L494.1 1307.3 L495.1 1304.6 L496.1 1297.9 L497.1 1302.5 L498.1 1301.3 L499.1 1309.4 L500.1 1300.3 L501.2 1301.8 L502.2 1301.0 L503.2 1298.1 L504.2 1300.8 L505.2 1302.6 L506.2 1299.3 L507.2 1297.0 L508.3 1299.3 L509.3 1301.5 L510.3 1299.7 L511.3 1302.4 L512.3 1301.0 L513.3 1299.7 L514.3 1305.2 L515.4 1299.5 L516.4 1298.7 L517.4 1299.3 L518.4 1303.0 L519.4 1311.0 L520.4 1314.3 L521.4 1313.4 L522.5 1312.5 L523.5 1313.1 L524.5 1310.9 L525.5 1309.6 L526.5 1303.0 L527.5 1305.9 L528.5 1307.2 L529.6 1294.6 L530.6 1307.1 L531.6 1310.1 L532.6 1310.0 L533.6 1307.0 L534.6 1305.4 L535.6 1308.1 L536.7 1310.4 L537.7 1303.9 L538.7 1304.2 L539.7 1308.5 L540.7 1306.9 L541.7 1308.1 L542.7 1308.1 L543.8 1302.7 L544.8 1290.4 L545.8 1288.2 L546.8 1294.2 L547.8 1298.2 L548.8 1289.2 L549.8 1285.5 L550.9 1286.1 L551.9 1289.8 L552.9 1285.1 L553.9 1282.3 L554.9 1281.7 L555.9 1284.8 L556.9 1287.9 L558.0 1294.8 L559.0 1287.1 L560.0 1286.3 L561.0 1288.2 L562.0 1291.1 L563.0 1290.8 L564.0 1294.1 L565.1 1287.7 L566.1 1281.9 L567.1 1289.5 L568.1 1296.5 L569.1 1291.5 L570.1 1299.7 L571.1 1302.0 L572.2 1299.3 L573.2 1304.6 L574.2 1302.8 L575.2 1306.0 L576.2 1309.1 L577.2 1301.5 L578.2 1304.7 L579.3 1308.3 L580.3 1307.0 L581.3 1306.6 L582.3 1313.8" fill="none" stroke="#444674" stroke-width="4" stroke-linejoin="round"/><path d="M290.2 1331.9 L291.2 1331.0 L292.2 1331.1 L293.2 1331.2 L294.3 1330.8 L295.3 1330.0 L296.3 1329.3 L297.3 1328.6 L298.3 1328.8 L299.3 1327.7 L300.3 1325.9 L301.4 1326.1 L302.4 1327.3 L303.4 1328.9 L304.4 1329.7 L305.4 1328.3 L306.4 1326.6 L307.4 1325.3 L308.5 1322.6 L309.5 1324.8 L310.5 1327.9 L311.5 1328.6 L312.5 1329.9 L313.5 1332.4 L314.5 1334.0 L315.6 1333.8 L316.6 1333.9 L317.6 1334.2 L318.6 1334.0 L319.6 1333.6 L320.6 1333.7 L321.6 1334.1 L322.7 1333.2 L323.7 1331.8 L324.7 1330.9 L325.7 1329.9 L326.7 1328.3 L327.7 1329.9 L328.7 1331.8 L329.8 1332.8 L330.8 1333.4 L331.8 1333.6 L332.8 1334.2 L333.8 1334.8 L334.8 1335.0 L335.8 1335.4 L336.9 1335.5 L337.9 1335.2 L338.9 1335.3 L339.9 1335.2 L340.9 1335.1 L341.9 1335.1 L342.9 1335.2 L344.0 1335.2 L345.0 1335.4 L346.0 1335.4 L347.0 1335.2 L348.0 1335.5 L349.0 1335.5 L350.0 1335.3 L351.1 1335.3 L352.1 1335.3 L353.1 1335.4 L354.1 1335.3 L355.1 1335.4 L356.1 1335.4 L357.1 1335.3 L358.2 1335.3 L359.2 1335.3 L360.2 1335.3 L361.2 1335.2 L362.2 1335.3 L363.2 1335.3 L364.2 1335.1 L365.3 1335.0 L366.3 1335.3 L367.3 1335.4 L368.3 1335.2 L369.3 1335.3 L370.3 1335.5 L371.3 1335.3 L372.4 1335.4 L373.4 1335.5 L374.4 1335.2 L375.4 1335.4 L376.4 1335.6 L377.4 1335.6 L378.4 1335.5 L379.5 1335.2 L380.5 1335.0 L381.5 1335.4 L382.5 1335.7 L383.5 1335.4 L384.5 1335.2 L385.5 1335.2 L386.6 1335.4 L387.6 1335.5 L388.6 1335.4 L389.6 1335.4 L390.6 1335.5 L391.6 1335.5 L392.6 1335.3 L393.7 1335.4 L394.7 1335.5 L395.7 1335.6 L396.7 1335.6 L397.7 1335.4 L398.7 1335.3 L399.7 1335.6 L400.8 1335.5 L401.8 1335.2 L402.8 1335.2 L403.8 1335.2 L404.8 1335.5 L405.8 1335.7 L406.8 1335.5 L407.9 1335.1 L408.9 1335.3 L409.9 1335.6 L410.9 1335.5 L411.9 1335.5 L412.9 1335.6 L413.9 1335.5 L415.0 1335.5 L416.0 1335.3 L417.0 1335.4 L418.0 1335.4 L419.0 1335.4 L420.0 1335.5 L421.0 1335.7 L422.1 1335.9 L423.1 1335.6 L424.1 1335.5 L425.1 1335.5 L426.1 1335.4 L427.1 1335.3 L428.1 1335.3 L429.2 1335.3 L430.2 1335.4 L431.2 1335.6 L432.2 1335.7 L433.2 1335.6 L434.2 1335.7 L435.2 1335.7 L436.2 1335.6 L437.3 1335.5 L438.3 1335.5 L439.3 1335.8 L440.3 1335.7 L441.3 1335.5 L442.3 1335.4 L443.3 1335.4 L444.4 1335.5 L445.4 1335.7 L446.4 1335.4 L447.4 1335.3 L448.4 1335.3 L449.4 1335.2 L450.4 1335.4 L451.5 1335.6 L452.5 1335.5 L453.5 1335.5 L454.5 1335.5 L455.5 1335.0 L456.5 1334.6 L457.5 1334.4 L458.6 1334.1 L459.6 1333.5 L460.6 1333.0 L461.6 1332.5 L462.6 1333.4 L463.6 1334.5 L464.6 1335.5 L465.7 1335.5 L466.7 1335.5 L467.7 1335.6 L468.7 1335.6 L469.7 1335.6 L470.7 1335.5 L471.7 1335.5 L472.8 1335.5 L473.8 1335.6 L474.8 1335.6 L475.8 1335.5 L476.8 1335.7 L477.8 1335.6 L478.8 1335.6 L479.9 1335.5 L480.9 1335.5 L481.9 1335.6 L482.9 1335.7 L483.9 1335.4 L484.9 1335.3 L485.9 1335.6 L487.0 1335.6 L488.0 1335.6 L489.0 1335.4 L490.0 1335.4 L491.0 1335.5 L492.0 1335.3 L493.0 1335.5 L494.1 1335.5 L495.1 1335.3 L496.1 1335.3 L497.1 1335.3 L498.1 1335.3 L499.1 1335.3 L500.1 1335.3 L501.2 1335.4 L502.2 1335.3 L503.2 1335.4 L504.2 1335.4 L505.2 1335.3 L506.2 1335.5 L507.2 1335.4 L508.3 1335.1 L509.3 1335.0 L510.3 1335.3 L511.3 1335.3 L512.3 1335.3 L513.3 1335.4 L514.3 1335.3 L515.4 1335.6 L516.4 1335.5 L517.4 1335.4 L518.4 1335.5 L519.4 1335.0 L520.4 1334.0 L521.4 1332.7 L522.5 1330.5 L523.5 1327.8 L524.5 1327.4 L525.5 1327.4 L526.5 1327.1 L527.5 1328.6 L528.5 1328.0 L529.6 1327.5 L530.6 1329.0 L531.6 1330.3 L532.6 1330.8 L533.6 1330.9 L534.6 1331.4 L535.6 1330.8 L536.7 1329.9 L537.7 1329.6 L538.7 1328.8 L539.7 1328.2 L540.7 1329.3 L541.7 1330.1 L542.7 1330.0 L543.8 1330.4 L544.8 1330.8 L545.8 1331.5 L546.8 1331.7 L547.8 1331.0 L548.8 1331.1 L549.8 1332.0 L550.9 1332.1 L551.9 1331.6 L552.9 1331.8 L553.9 1331.4 L554.9 1329.6 L555.9 1328.7 L556.9 1328.0 L558.0 1326.0 L559.0 1328.2 L560.0 1328.6 L561.0 1329.0 L562.0 1331.2 L563.0 1332.0 L564.0 1332.4 L565.1 1333.6 L566.1 1334.1 L567.1 1334.2 L568.1 1334.1 L569.1 1333.5 L570.1 1333.1 L571.1 1332.4 L572.2 1331.9 L573.2 1331.7 L574.2 1332.1 L575.2 1332.8 L576.2 1333.2 L577.2 1333.9 L578.2 1334.0 L579.3 1333.1 L580.3 1332.5 L581.3 1332.6 L582.3 1332.3" fill="none" stroke="#f2b712" stroke-width="4" stroke-linejoin="round"/><rect x="290.2" y="1336.2" width="292.1" height="2" fill="#7c6b8e"/><rect x="312.0" y="1337.2" width="2" height="10" fill="#7c6b8e"/><rect x="360.4" y="1337.2" width="2" height="10" fill="#7c6b8e"/><rect x="408.8" y="1337.2" width="2" height="10" fill="#7c6b8e"/><rect x="457.2" y="1337.2" width="2" height="10" fill="#7c6b8e"/><rect x="505.6" y="1337.2" width="2" height="10" fill="#7c6b8e"/><rect x="554.0" y="1337.2" width="2" height="10" fill="#7c6b8e"/></svg><div class="t r" style="left:60.5px;top:417px;font-size:24px;color:#80708f;">0</div><div class="t r" style="left:31.9px;top:363px;font-size:24px;color:#80708f;letter-spacing:1.64px;">10k</div><div class="t r" style="left:31.9px;top:308px;font-size:24px;color:#80708f;letter-spacing:1.64px;">20k</div><div class="t r" style="left:31.9px;top:254px;font-size:24px;color:#80708f;letter-spacing:1.64px;">30k</div><div class="t r" style="left:31.9px;top:200px;font-size:24px;color:#80708f;letter-spacing:1.64px;">40k</div><div class="t r" style="left:31.9px;top:145px;font-size:24px;color:#80708f;letter-spacing:1.64px;">50k</div><div class="t r" style="left:68.8px;top:453px;font-size:24px;color:#80708f;letter-spacing:-0.15px;width:318.8px;overflow:hidden;">4:00 PM</div><div class="t r" style="left:157.3px;top:453px;font-size:24px;color:#80708f;letter-spacing:0.51px;width:230.2px;overflow:hidden;">12:00 AM</div><div class="t r" style="left:303.0px;top:453px;font-size:24px;color:#80708f;letter-spacing:0.18px;width:84.5px;overflow:hidden;">12:00 PM</div></section><section class="card" style="left:656px;top:906px;width:426px;height:512px"><div class="t ttl" style="left:32.5px;top:37px;font-size:32px;color:#2b2233;font-weight:700;letter-spacing:0.34px;">Affected Users</div><div class="" style="position:absolute;left:32.200000000000045px;top:83px;width:16px;height:16px;border-radius:8px;background:#444674;"></div><div class="t r" style="left:58.9px;top:80px;font-size:22px;color:#3e3446;letter-spacing:0.25px;width:196.6px;overflow:hidden;">Known Users : count_unique( user )</div><svg class="ic" style="left:280.0px;top:76.0px" width="18" height="30" viewBox="0 0 18 30"><path d="M18 0V30L0 15Z" fill="#aaa5b3"/></svg><div class="t r" style="left:318.8px;top:80px;font-size:22px;color:#333;letter-spacing:0.50px;">1/3</div><svg class="ic" style="left:372.0px;top:76.0px" width="18" height="30" viewBox="0 0 18 30"><path d="M0 0V30L18 15Z" fill="#2f2c43"/></svg><svg class="chart" style="left:0;top:0" width="422" height="508" viewBox="658 908 422 508"><rect x="750.9" y="1297.3" width="289.1" height="2" fill="#f7f6f9"/><rect x="750.9" y="1258.3" width="289.1" height="2" fill="#f7f6f9"/><rect x="750.9" y="1219.4" width="289.1" height="2" fill="#f7f6f9"/><rect x="750.9" y="1180.5" width="289.1" height="2" fill="#f7f6f9"/><rect x="750.9" y="1141.5" width="289.1" height="2" fill="#f7f6f9"/><rect x="750.9" y="1102.6" width="289.1" height="2" fill="#f7f6f9"/><rect x="750.9" y="1063.7" width="289.1" height="2" fill="#f7f6f9"/><path d="M750.9 1311.9 L751.9 1274.7 L752.9 1268.2 L753.9 1251.6 L754.9 1271.9 L755.9 1253.1 L756.9 1267.5 L757.9 1260.6 L758.9 1268.0 L759.9 1284.2 L760.9 1273.5 L761.9 1269.1 L762.9 1278.6 L763.9 1279.5 L765.0 1267.5 L766.0 1273.8 L767.0 1280.4 L768.0 1273.0 L769.0 1261.8 L770.0 1270.5 L771.0 1262.7 L772.0 1261.5 L773.0 1273.7 L774.0 1283.2 L775.0 1286.4 L776.0 1281.5 L777.0 1279.3 L778.0 1285.2 L779.0 1286.6 L780.0 1293.8 L781.0 1293.1 L782.0 1295.5 L783.0 1293.9 L784.0 1297.4 L785.0 1297.8 L786.0 1291.8 L787.0 1293.9 L788.0 1293.6 L789.0 1286.3 L790.0 1290.5 L791.1 1276.9 L792.1 1286.7 L793.1 1294.4 L794.1 1288.4 L795.1 1290.8 L796.1 1296.0 L797.1 1288.6 L798.1 1297.2 L799.1 1307.5 L800.1 1291.7 L801.1 1298.2 L802.1 1290.2 L803.1 1299.6 L804.1 1302.3 L805.1 1292.2 L806.1 1303.0 L807.1 1298.8 L808.1 1294.9 L809.1 1300.4 L810.1 1301.8 L811.1 1301.8 L812.1 1299.5 L813.1 1305.5 L814.1 1300.8 L815.1 1301.2 L816.1 1295.6 L817.2 1304.8 L818.2 1307.0 L819.2 1301.8 L820.2 1305.8 L821.2 1303.8 L822.2 1304.6 L823.2 1301.5 L824.2 1307.9 L825.2 1306.7 L826.2 1314.7 L827.2 1310.1 L828.2 1303.6 L829.2 1310.5 L830.2 1311.1 L831.2 1313.0 L832.2 1308.7 L833.2 1310.3 L834.2 1314.4 L835.2 1310.2 L836.2 1311.7 L837.2 1310.9 L838.2 1314.7 L839.2 1309.5 L840.2 1313.1 L841.2 1314.7 L842.2 1316.0 L843.3 1315.8 L844.3 1313.8 L845.3 1316.7 L846.3 1314.3 L847.3 1315.8 L848.3 1314.3 L849.3 1315.4 L850.3 1317.3 L851.3 1321.0 L852.3 1316.7 L853.3 1315.8 L854.3 1317.1 L855.3 1316.4 L856.3 1318.5 L857.3 1318.4 L858.3 1319.5 L859.3 1315.1 L860.3 1317.6 L861.3 1318.9 L862.3 1320.7 L863.3 1318.5 L864.3 1315.7 L865.3 1317.7 L866.3 1320.0 L867.3 1316.1 L868.3 1316.3 L869.4 1317.3 L870.4 1317.7 L871.4 1317.2 L872.4 1318.3 L873.4 1317.9 L874.4 1320.7 L875.4 1316.6 L876.4 1318.9 L877.4 1315.7 L878.4 1322.9 L879.4 1318.0 L880.4 1317.5 L881.4 1319.9 L882.4 1318.5 L883.4 1318.0 L884.4 1318.3 L885.4 1320.3 L886.4 1319.5 L887.4 1317.5 L888.4 1317.0 L889.4 1319.1 L890.4 1319.2 L891.4 1318.9 L892.4 1317.4 L893.4 1321.2 L894.4 1321.7 L895.5 1319.1 L896.5 1321.3 L897.5 1320.3 L898.5 1319.1 L899.5 1318.4 L900.5 1321.2 L901.5 1317.9 L902.5 1322.5 L903.5 1318.3 L904.5 1322.1 L905.5 1321.6 L906.5 1318.1 L907.5 1320.0 L908.5 1320.7 L909.5 1320.1 L910.5 1318.5 L911.5 1319.4 L912.5 1319.3 L913.5 1317.4 L914.5 1320.6 L915.5 1320.1 L916.5 1320.2 L917.5 1317.2 L918.5 1317.5 L919.5 1317.0 L920.5 1319.2 L921.5 1319.3 L922.6 1317.3 L923.6 1319.5 L924.6 1317.1 L925.6 1317.2 L926.6 1319.7 L927.6 1318.4 L928.6 1318.4 L929.6 1314.7 L930.6 1312.9 L931.6 1317.9 L932.6 1316.5 L933.6 1320.4 L934.6 1313.7 L935.6 1313.1 L936.6 1314.6 L937.6 1308.6 L938.6 1314.5 L939.6 1310.5 L940.6 1309.2 L941.6 1312.7 L942.6 1306.3 L943.6 1305.4 L944.6 1312.1 L945.6 1311.8 L946.6 1305.4 L947.6 1306.9 L948.7 1310.2 L949.7 1307.0 L950.7 1305.3 L951.7 1304.3 L952.7 1299.8 L953.7 1300.1 L954.7 1293.9 L955.7 1294.0 L956.7 1295.5 L957.7 1292.6 L958.7 1290.4 L959.7 1291.8 L960.7 1299.1 L961.7 1288.9 L962.7 1291.4 L963.7 1283.1 L964.7 1289.2 L965.7 1286.1 L966.7 1286.0 L967.7 1278.1 L968.7 1284.9 L969.7 1286.4 L970.7 1282.5 L971.7 1285.7 L972.7 1281.7 L973.7 1281.8 L974.8 1279.4 L975.8 1269.1 L976.8 1281.6 L977.8 1278.0 L978.8 1277.9 L979.8 1271.0 L980.8 1281.2 L981.8 1276.7 L982.8 1270.9 L983.8 1265.4 L984.8 1268.5 L985.8 1273.1 L986.8 1277.0 L987.8 1269.5 L988.8 1265.2 L989.8 1273.8 L990.8 1276.2 L991.8 1276.2 L992.8 1283.0 L993.8 1277.8 L994.8 1276.1 L995.8 1271.1 L996.8 1272.7 L997.8 1283.6 L998.8 1273.4 L999.8 1274.5 L1000.9 1288.6 L1001.9 1289.1 L1002.9 1293.5 L1003.9 1295.2 L1004.9 1303.6 L1005.9 1290.8 L1006.9 1298.6 L1007.9 1291.0 L1008.9 1295.3 L1009.9 1296.8 L1010.9 1294.5 L1011.9 1288.6 L1012.9 1295.2 L1013.9 1291.7 L1014.9 1291.0 L1015.9 1295.9 L1016.9 1280.0 L1017.9 1282.8 L1018.9 1285.0 L1019.9 1277.9 L1020.9 1288.5 L1021.9 1282.9 L1022.9 1272.1 L1023.9 1275.4 L1024.9 1292.8 L1025.9 1298.3 L1027.0 1283.5 L1028.0 1269.2 L1029.0 1277.1 L1030.0 1273.9 L1031.0 1269.1 L1032.0 1280.4 L1033.0 1275.6 L1034.0 1274.2 L1035.0 1278.1 L1036.0 1280.5 L1037.0 1287.8 L1038.0 1284.0 L1039.0 1290.6 L1040.0 1284.4" fill="none" stroke="#444674" stroke-width="4" stroke-linejoin="round"/><path d="M750.9 1230.1 L751.9 1160.4 L752.9 1083.6 L753.9 1115.4 L754.9 1115.5 L755.9 1109.3 L756.9 1156.5 L757.9 1109.7 L758.9 1126.3 L759.9 1067.8 L760.9 1097.7 L761.9 1112.8 L762.9 1111.0 L763.9 1121.1 L765.0 1131.2 L766.0 1113.8 L767.0 1091.0 L768.0 1109.9 L769.0 1078.6 L770.0 1108.8 L771.0 1103.0 L772.0 1067.8 L773.0 1094.9 L774.0 1134.0 L775.0 1138.9 L776.0 1129.9 L777.0 1107.3 L778.0 1161.8 L779.0 1168.3 L780.0 1150.6 L781.0 1194.6 L782.0 1180.7 L783.0 1154.6 L784.0 1157.8 L785.0 1165.3 L786.0 1150.0 L787.0 1225.4 L788.0 1141.8 L789.0 1187.3 L790.0 1204.2 L791.1 1165.3 L792.1 1159.1 L793.1 1184.6 L794.1 1199.1 L795.1 1179.7 L796.1 1183.4 L797.1 1158.7 L798.1 1173.4 L799.1 1185.8 L800.1 1171.5 L801.1 1196.0 L802.1 1209.8 L803.1 1186.1 L804.1 1187.9 L805.1 1202.4 L806.1 1213.0 L807.1 1198.7 L808.1 1241.8 L809.1 1195.2 L810.1 1199.9 L811.1 1232.3 L812.1 1209.2 L813.1 1224.8 L814.1 1202.2 L815.1 1241.3 L816.1 1227.3 L817.2 1207.3 L818.2 1203.0 L819.2 1246.3 L820.2 1226.6 L821.2 1217.7 L822.2 1230.3 L823.2 1205.6 L824.2 1238.9 L825.2 1221.9 L826.2 1238.5 L827.2 1211.9 L828.2 1228.6 L829.2 1233.2 L830.2 1248.3 L831.2 1177.6 L832.2 1223.8 L833.2 1224.7 L834.2 1221.8 L835.2 1230.6 L836.2 1241.8 L837.2 1244.8 L838.2 1246.3 L839.2 1228.2 L840.2 1255.0 L841.2 1248.9 L842.2 1248.1 L843.3 1245.2 L844.3 1244.0 L845.3 1260.0 L846.3 1265.0 L847.3 1253.5 L848.3 1246.1 L849.3 1250.9 L850.3 1256.1 L851.3 1261.0 L852.3 1258.3 L853.3 1263.2 L854.3 1257.9 L855.3 1265.3 L856.3 1255.7 L857.3 1253.6 L858.3 1245.3 L859.3 1243.8 L860.3 1222.3 L861.3 1226.2 L862.3 1222.1 L863.3 1249.6 L864.3 1237.1 L865.3 1240.8 L866.3 1233.5 L867.3 1256.6 L868.3 1232.1 L869.4 1234.7 L870.4 1253.4 L871.4 1252.6 L872.4 1251.0 L873.4 1244.8 L874.4 1240.2 L875.4 1230.0 L876.4 1245.5 L877.4 1238.4 L878.4 1242.4 L879.4 1230.8 L880.4 1237.6 L881.4 1232.9 L882.4 1249.7 L883.4 1243.2 L884.4 1249.9 L885.4 1236.9 L886.4 1245.2 L887.4 1253.8 L888.4 1257.1 L889.4 1254.2 L890.4 1263.4 L891.4 1267.0 L892.4 1262.0 L893.4 1254.8 L894.4 1269.8 L895.5 1269.2 L896.5 1270.3 L897.5 1269.2 L898.5 1257.2 L899.5 1253.1 L900.5 1255.6 L901.5 1251.6 L902.5 1253.2 L903.5 1253.4 L904.5 1263.1 L905.5 1257.4 L906.5 1254.5 L907.5 1259.7 L908.5 1258.4 L909.5 1260.5 L910.5 1258.2 L911.5 1252.2 L912.5 1259.2 L913.5 1258.2 L914.5 1250.4 L915.5 1248.6 L916.5 1240.0 L917.5 1259.2 L918.5 1239.3 L919.5 1244.8 L920.5 1239.5 L921.5 1233.7 L922.6 1230.6 L923.6 1229.4 L924.6 1233.5 L925.6 1222.7 L926.6 1233.4 L927.6 1231.1 L928.6 1223.4 L929.6 1230.9 L930.6 1211.2 L931.6 1217.4 L932.6 1205.5 L933.6 1217.1 L934.6 1216.0 L935.6 1208.2 L936.6 1200.1 L937.6 1206.7 L938.6 1195.3 L939.6 1194.8 L940.6 1178.6 L941.6 1195.4 L942.6 1179.1 L943.6 1191.3 L944.6 1192.1 L945.6 1188.0 L946.6 1190.4 L947.6 1176.4 L948.7 1166.2 L949.7 1172.1 L950.7 1164.4 L951.7 1151.1 L952.7 1161.2 L953.7 1158.7 L954.7 1160.4 L955.7 1171.6 L956.7 1143.1 L957.7 1168.4 L958.7 1138.4 L959.7 1143.3 L960.7 1126.9 L961.7 1138.4 L962.7 1144.9 L963.7 1127.5 L964.7 1136.4 L965.7 1128.9 L966.7 1123.3 L967.7 1123.0 L968.7 1121.0 L969.7 1127.3 L970.7 1115.7 L971.7 1140.5 L972.7 1107.4 L973.7 1118.7 L974.8 1078.7 L975.8 1071.5 L976.8 1118.0 L977.8 1081.8 L978.8 1086.2 L979.8 1100.9 L980.8 1075.7 L981.8 1091.5 L982.8 1112.3 L983.8 1088.4 L984.8 1087.1 L985.8 1086.4 L986.8 1110.2 L987.8 1085.2 L988.8 1086.8 L989.8 1117.8 L990.8 1113.8 L991.8 1108.7 L992.8 1114.3 L993.8 1080.0 L994.8 1100.6 L995.8 1116.9 L996.8 1112.4 L997.8 1100.6 L998.8 1075.7 L999.8 1118.3 L1000.9 1122.4 L1001.9 1125.8 L1002.9 1140.8 L1003.9 1122.4 L1004.9 1162.3 L1005.9 1146.9 L1006.9 1149.3 L1007.9 1140.2 L1008.9 1157.0 L1009.9 1118.6 L1010.9 1137.0 L1011.9 1129.2 L1012.9 1135.0 L1013.9 1126.1 L1014.9 1102.5 L1015.9 1090.0 L1016.9 1094.0 L1017.9 1088.4 L1018.9 1095.9 L1019.9 1105.8 L1020.9 1095.6 L1021.9 1099.6 L1022.9 1108.4 L1023.9 1096.9 L1024.9 1088.9 L1025.9 1102.5 L1027.0 1110.0 L1028.0 1095.1 L1029.0 1078.9 L1030.0 1106.6 L1031.0 1111.3 L1032.0 1122.6 L1033.0 1117.5 L1034.0 1162.8 L1035.0 1123.6 L1036.0 1098.3 L1037.0 1127.3 L1038.0 1116.4 L1039.0 1144.1 L1040.0 1171.2" fill="none" stroke="#f2b712" stroke-width="4" stroke-linejoin="round"/><rect x="750.9" y="1336.2" width="289.1" height="2" fill="#7c6b8e"/><rect x="772.0" y="1337.2" width="2" height="10" fill="#7c6b8e"/><rect x="820.0" y="1337.2" width="2" height="10" fill="#7c6b8e"/><rect x="868.0" y="1337.2" width="2" height="10" fill="#7c6b8e"/><rect x="916.0" y="1337.2" width="2" height="10" fill="#7c6b8e"/><rect x="964.0" y="1337.2" width="2" height="10" fill="#7c6b8e"/><rect x="1012.0" y="1337.2" width="2" height="10" fill="#7c6b8e"/></svg><div class="t r" style="left:62.5px;top:417px;font-size:24px;color:#80708f;">0</div><div class="t r" style="left:32.4px;top:378px;font-size:24px;color:#80708f;letter-spacing:1.70px;">100</div><div class="t r" style="left:32.4px;top:340px;font-size:24px;color:#80708f;letter-spacing:1.70px;">200</div><div class="t r" style="left:32.4px;top:301px;font-size:24px;color:#80708f;letter-spacing:1.70px;">300</div><div class="t r" style="left:32.4px;top:262px;font-size:24px;color:#80708f;letter-spacing:1.70px;">400</div><div class="t r" style="left:32.4px;top:223px;font-size:24px;color:#80708f;letter-spacing:1.70px;">500</div><div class="t r" style="left:32.4px;top:184px;font-size:24px;color:#80708f;letter-spacing:1.70px;">600</div><div class="t r" style="left:32.4px;top:145px;font-size:24px;color:#80708f;letter-spacing:1.70px;">700</div><div class="t r" style="left:158.5px;top:453px;font-size:24px;color:#80708f;letter-spacing:0.51px;width:229.5px;overflow:hidden;">12:00 AM</div><div class="t r" style="left:303.0px;top:453px;font-size:24px;color:#80708f;letter-spacing:0.18px;width:85.0px;overflow:hidden;">12:00 PM</div></section><section class="card" style="left:1114px;top:906px;width:884px;height:512px"><div class="t ttl" style="left:32.5px;top:37px;font-size:32px;color:#2b2233;font-weight:700;letter-spacing:-0.39px;">Errors by Browser</div><div class="" style="position:absolute;left:0px;top:100px;width:880px;height:2px;background:#e0dce5;"></div><div class="" style="position:absolute;left:0px;top:102px;width:880px;height:88px;background:#faf9fb;"></div><div class="" style="position:absolute;left:0px;top:190px;width:880px;height:2px;background:#e0dce5;"></div><div class="t" style="left:40.4px;top:134px;font-size:24px;color:#80708f;font-weight:700;letter-spacing:-1.34px;">BROWSER.NAME</div><div class="t" style="left:740.8px;top:134px;font-size:24px;color:#80708f;font-weight:700;letter-spacing:-0.46px;">COUNT()</div><div class="" style="position:absolute;left:0px;top:262px;width:880px;height:2px;background:#e0dce5;"></div><div class="" style="position:absolute;left:0px;top:334px;width:880px;height:2px;background:#e0dce5;"></div><div class="" style="position:absolute;left:0px;top:406px;width:880px;height:2px;background:#e0dce5;"></div><div class="" style="position:absolute;left:0px;top:478px;width:880px;height:2px;background:#e0dce5;"></div><div class="" style="position:absolute;left:0px;top:550px;width:880px;height:2px;background:#e0dce5;"></div><div class="t r" style="left:40.4px;top:212px;font-size:28px;color:#3e3446;letter-spacing:0.09px;">Google Chrome</div><div class="t r" style="left:774.5px;top:212px;font-size:28px;color:#3e3446;letter-spacing:1.41px;">132k</div><div class="t r" style="left:40.4px;top:284px;font-size:28px;color:#3e3446;letter-spacing:0.37px;">Safari</div><div class="t r" style="left:791.9px;top:284px;font-size:28px;color:#3e3446;letter-spacing:1.19px;">73k</div><div class="t r" style="left:40.4px;top:356px;font-size:28px;color:#3e3446;letter-spacing:0.62px;">Firefox</div><div class="t r" style="left:791.1px;top:356px;font-size:28px;color:#3e3446;letter-spacing:1.58px;">64k</div><div class="t r" style="left:40.4px;top:428px;font-size:28px;color:#3e3446;letter-spacing:0.34px;">Chrome</div><div class="t r" style="left:791.1px;top:428px;font-size:28px;color:#3e3446;letter-spacing:1.58px;">57k</div><div class="t r" style="left:40.4px;top:500px;font-size:28px;color:#3e3446;">Mobile Safari</div><div class="t r" style="left:794.2px;top:500px;font-size:28px;color:#3e3446;">39k</div></section><section class="card" style="left:2030px;top:906px;width:884px;height:512px"><div class="t ttl" style="left:32.5px;top:37px;font-size:32px;color:#2b2233;font-weight:700;letter-spacing:-0.41px;">Errors by Browser Over Time</div><div class="" style="position:absolute;left:31.699999999999818px;top:83px;width:16px;height:16px;border-radius:8px;background:#444674;"></div><div class="t r" style="left:58.4px;top:80px;font-size:22px;color:#3e3446;letter-spacing:0.04px;">Google Chrome</div><div class="" style="position:absolute;left:238.69999999999982px;top:83px;width:16px;height:16px;border-radius:8px;background:#7a5088;"></div><div class="t r" style="left:265.4px;top:80px;font-size:22px;color:#3e3446;letter-spacing:0.26px;">Safari</div><div class="" style="position:absolute;left:348.6999999999998px;top:83px;width:16px;height:16px;border-radius:8px;background:#b85586;"></div><div class="t r" style="left:375.0px;top:80px;font-size:22px;color:#3e3446;letter-spacing:0.56px;">Firefox</div><div class="" style="position:absolute;left:470px;top:83px;width:16px;height:16px;border-radius:8px;background:#e9626e;"></div><div class="t r" style="left:496.3px;top:80px;font-size:22px;color:#3e3446;letter-spacing:0.19px;">Chrome</div><div class="" style="position:absolute;left:600.3000000000002px;top:83px;width:16px;height:16px;border-radius:8px;background:#f58c46;"></div><div class="t r" style="left:626.6px;top:80px;font-size:22px;color:#3e3446;letter-spacing:-0.88px;width:85.4px;overflow:hidden;">Mobile Safari</div><svg class="ic" style="left:737.8px;top:76.0px" width="18" height="30" viewBox="0 0 18 30"><path d="M18 0V30L0 15Z" fill="#aaa5b3"/></svg><div class="t r" style="left:776.8px;top:80px;font-size:22px;color:#333;letter-spacing:0.70px;">1/2</div><svg class="ic" style="left:829.5px;top:76.0px" width="18" height="30" viewBox="0 0 18 30"><path d="M0 0V30L18 15Z" fill="#2f2c43"/></svg><svg class="chart" style="left:0;top:0" width="880" height="508" viewBox="2032 908 880 508"><rect x="2106.6" y="1267.6" width="765.9" height="2" fill="#f7f6f9"/><rect x="2106.6" y="1199.6" width="765.9" height="2" fill="#f7f6f9"/><rect x="2106.6" y="1131.6" width="765.9" height="2" fill="#f7f6f9"/><rect x="2106.6" y="1063.6" width="765.9" height="2" fill="#f7f6f9"/><path d="M2106.6 1272.9 L2109.3 1124.4 L2111.9 1184.8 L2114.6 1190.4 L2117.2 1142.8 L2119.9 1195.1 L2122.6 1134.0 L2125.2 1195.6 L2127.9 1183.7 L2130.5 1187.0 L2133.2 1208.1 L2135.9 1201.9 L2138.5 1212.5 L2141.2 1187.0 L2143.8 1216.4 L2146.5 1210.5 L2149.2 1202.7 L2151.8 1212.2 L2154.5 1214.1 L2157.1 1199.9 L2159.8 1153.0 L2162.4 1125.8 L2165.1 1220.6 L2167.8 1190.4 L2170.4 1217.7 L2173.1 1216.5 L2175.7 1203.1 L2178.4 1191.7 L2181.1 1205.8 L2183.7 1215.5 L2186.4 1216.5 L2189.0 1230.7 L2191.7 1228.6 L2194.4 1223.7 L2197.0 1208.0 L2199.7 1223.2 L2202.3 1226.8 L2205.0 1234.0 L2207.7 1199.2 L2210.3 1229.7 L2213.0 1225.1 L2215.6 1226.7 L2218.3 1228.4 L2221.0 1226.3 L2223.6 1231.0 L2226.3 1234.8 L2228.9 1238.6 L2231.6 1223.5 L2234.2 1234.0 L2236.9 1241.4 L2239.6 1235.3 L2242.2 1214.2 L2244.9 1241.0 L2247.5 1237.2 L2250.2 1213.3 L2252.9 1233.3 L2255.5 1240.6 L2258.2 1244.0 L2260.8 1251.6 L2263.5 1247.7 L2266.2 1238.8 L2268.8 1244.9 L2271.5 1233.4 L2274.1 1243.4 L2276.8 1224.4 L2279.5 1242.1 L2282.1 1251.1 L2284.8 1245.1 L2287.4 1158.0 L2290.1 1237.0 L2292.8 1248.3 L2295.4 1240.1 L2298.1 1238.3 L2300.7 1247.7 L2303.4 1251.5 L2306.1 1206.0 L2308.7 1252.8 L2311.4 1240.2 L2314.0 1239.4 L2316.7 1228.5 L2319.3 1207.4 L2322.0 1252.4 L2324.7 1253.9 L2327.3 1254.4 L2330.0 1245.7 L2332.6 1256.0 L2335.3 1259.6 L2338.0 1242.6 L2340.6 1241.3 L2343.3 1252.8 L2345.9 1258.5 L2348.6 1253.3 L2351.3 1258.3 L2353.9 1260.4 L2356.6 1260.2 L2359.2 1260.9 L2361.9 1259.5 L2364.6 1268.9 L2367.2 1264.5 L2369.9 1257.8 L2372.5 1267.3 L2375.2 1275.7 L2377.9 1254.4 L2380.5 1253.5 L2383.2 1265.3 L2385.8 1270.2 L2388.5 1272.2 L2391.2 1263.8 L2393.8 1264.9 L2396.5 1273.5 L2399.1 1265.2 L2401.8 1269.4 L2404.4 1262.1 L2407.1 1268.3 L2409.8 1262.9 L2412.4 1266.3 L2415.1 1270.7 L2417.7 1271.0 L2420.4 1279.5 L2423.1 1277.3 L2425.7 1273.3 L2428.4 1280.6 L2431.0 1279.0 L2433.7 1273.2 L2436.4 1270.8 L2439.0 1274.7 L2441.7 1273.0 L2444.3 1259.9 L2447.0 1272.2 L2449.7 1281.7 L2452.3 1282.1 L2455.0 1284.0 L2457.6 1279.7 L2460.3 1281.4 L2463.0 1260.1 L2465.6 1276.8 L2468.3 1288.8 L2470.9 1276.4 L2473.6 1261.8 L2476.3 1277.6 L2478.9 1282.6 L2481.6 1275.6 L2484.2 1281.1 L2486.9 1286.5 L2489.6 1268.8 L2492.2 1277.9 L2494.9 1282.5 L2497.5 1288.6 L2500.2 1290.2 L2502.8 1286.4 L2505.5 1256.4 L2508.2 1279.6 L2510.8 1274.9 L2513.5 1283.0 L2516.1 1280.9 L2518.8 1271.3 L2521.5 1273.6 L2524.1 1270.0 L2526.8 1276.7 L2529.4 1280.6 L2532.1 1277.5 L2534.8 1271.8 L2537.4 1267.1 L2540.1 1275.6 L2542.7 1270.9 L2545.4 1259.5 L2548.1 1264.5 L2550.7 1264.6 L2553.4 1261.9 L2556.0 1260.7 L2558.7 1262.9 L2561.4 1253.8 L2564.0 1242.8 L2566.7 1255.1 L2569.3 1254.7 L2572.0 1251.3 L2574.7 1234.6 L2577.3 1261.4 L2580.0 1257.2 L2582.6 1258.5 L2585.3 1260.2 L2587.9 1248.2 L2590.6 1243.5 L2593.3 1247.8 L2595.9 1241.0 L2598.6 1230.5 L2601.2 1247.6 L2603.9 1231.2 L2606.6 1245.8 L2609.2 1233.2 L2611.9 1236.8 L2614.5 1237.7 L2617.2 1239.0 L2619.9 1247.6 L2622.5 1231.2 L2625.2 1227.5 L2627.8 1219.5 L2630.5 1240.9 L2633.2 1247.6 L2635.8 1230.9 L2638.5 1231.4 L2641.1 1187.0 L2643.8 1224.7 L2646.5 1202.5 L2649.1 1221.4 L2651.8 1226.5 L2654.4 1208.7 L2657.1 1199.8 L2659.8 1216.6 L2662.4 1224.3 L2665.1 1229.3 L2667.7 1219.7 L2670.4 1231.9 L2673.0 1228.9 L2675.7 1218.8 L2678.4 1197.2 L2681.0 1205.5 L2683.7 1203.3 L2686.3 1218.6 L2689.0 1203.5 L2691.7 1199.3 L2694.3 1217.4 L2697.0 1210.4 L2699.6 1209.4 L2702.3 1206.2 L2705.0 1127.2 L2707.6 1205.0 L2710.3 1201.6 L2712.9 1202.7 L2715.6 1202.9 L2718.3 1190.4 L2720.9 1207.3 L2723.6 1188.2 L2726.2 1199.9 L2728.9 1207.5 L2731.6 1190.8 L2734.2 1189.5 L2736.9 1063.8 L2739.5 1209.0 L2742.2 1204.6 L2744.8 1194.9 L2747.5 1192.6 L2750.2 1188.9 L2752.8 1195.4 L2755.5 1192.2 L2758.1 1149.7 L2760.8 1138.2 L2763.5 1184.5 L2766.1 1166.6 L2768.8 1195.4 L2771.4 1188.2 L2774.1 1150.6 L2776.8 1166.4 L2779.4 1173.1 L2782.1 1108.8 L2784.7 1186.1 L2787.4 1176.1 L2790.1 1156.4 L2792.7 1208.2 L2795.4 1183.4 L2798.0 1188.6 L2800.7 1105.4 L2803.4 1207.6 L2806.0 1173.4 L2808.7 1170.0 L2811.3 1154.0 L2814.0 1163.9 L2816.7 1178.2 L2819.3 1195.0 L2822.0 1216.3 L2824.6 1180.2 L2827.3 1181.1 L2829.9 1173.3 L2832.6 1202.4 L2835.3 1156.4 L2837.9 1187.3 L2840.6 1192.7 L2843.2 1220.2 L2845.9 1201.3 L2848.6 1185.9 L2851.2 1181.5 L2853.9 1195.1 L2856.5 1198.8 L2859.2 1189.0 L2861.9 1194.0 L2864.5 1207.9 L2867.2 1194.9 L2869.8 1202.6 L2872.5 1222.0 L2872.5 1336.6 L2106.6 1336.6Z" fill="#f2b712"/><path d="M2106.6 1279.8 L2109.3 1188.9 L2111.9 1198.0 L2114.6 1213.4 L2117.2 1219.0 L2119.9 1219.4 L2122.6 1218.2 L2125.2 1213.1 L2127.9 1196.6 L2130.5 1208.0 L2133.2 1227.6 L2135.9 1216.3 L2138.5 1227.7 L2141.2 1225.2 L2143.8 1227.1 L2146.5 1226.6 L2149.2 1219.5 L2151.8 1225.7 L2154.5 1230.4 L2157.1 1220.3 L2159.8 1225.1 L2162.4 1196.0 L2165.1 1232.5 L2167.8 1235.3 L2170.4 1225.2 L2173.1 1227.4 L2175.7 1214.3 L2178.4 1207.8 L2181.1 1216.2 L2183.7 1231.0 L2186.4 1234.3 L2189.0 1242.6 L2191.7 1239.0 L2194.4 1236.7 L2197.0 1220.1 L2199.7 1233.9 L2202.3 1239.7 L2205.0 1244.1 L2207.7 1239.1 L2210.3 1240.2 L2213.0 1242.4 L2215.6 1247.2 L2218.3 1241.0 L2221.0 1235.1 L2223.6 1245.7 L2226.3 1248.7 L2228.9 1252.0 L2231.6 1234.2 L2234.2 1245.8 L2236.9 1254.5 L2239.6 1251.8 L2242.2 1244.6 L2244.9 1249.3 L2247.5 1244.1 L2250.2 1237.9 L2252.9 1252.9 L2255.5 1256.5 L2258.2 1258.0 L2260.8 1261.8 L2263.5 1257.1 L2266.2 1255.1 L2268.8 1255.6 L2271.5 1249.8 L2274.1 1255.4 L2276.8 1253.6 L2279.5 1257.8 L2282.1 1264.5 L2284.8 1263.9 L2287.4 1189.3 L2290.1 1257.5 L2292.8 1264.7 L2295.4 1257.4 L2298.1 1260.1 L2300.7 1261.6 L2303.4 1261.7 L2306.1 1259.8 L2308.7 1261.4 L2311.4 1265.3 L2314.0 1264.5 L2316.7 1259.9 L2319.3 1258.3 L2322.0 1265.7 L2324.7 1265.8 L2327.3 1270.8 L2330.0 1265.9 L2332.6 1272.2 L2335.3 1270.8 L2338.0 1256.8 L2340.6 1256.8 L2343.3 1264.1 L2345.9 1272.7 L2348.6 1266.3 L2351.3 1268.4 L2353.9 1274.7 L2356.6 1276.3 L2359.2 1275.2 L2361.9 1272.4 L2364.6 1280.5 L2367.2 1277.4 L2369.9 1272.4 L2372.5 1279.8 L2375.2 1284.7 L2377.9 1270.8 L2380.5 1274.9 L2383.2 1281.1 L2385.8 1282.0 L2388.5 1283.2 L2391.2 1280.0 L2393.8 1278.9 L2396.5 1285.4 L2399.1 1283.1 L2401.8 1279.7 L2404.4 1276.5 L2407.1 1284.8 L2409.8 1282.4 L2412.4 1280.4 L2415.1 1283.5 L2417.7 1285.6 L2420.4 1292.3 L2423.1 1291.7 L2425.7 1290.5 L2428.4 1292.9 L2431.0 1293.5 L2433.7 1289.7 L2436.4 1291.2 L2439.0 1290.3 L2441.7 1293.5 L2444.3 1289.1 L2447.0 1294.7 L2449.7 1294.8 L2452.3 1292.9 L2455.0 1297.6 L2457.6 1296.6 L2460.3 1296.8 L2463.0 1295.7 L2465.6 1297.3 L2468.3 1296.9 L2470.9 1293.9 L2473.6 1292.3 L2476.3 1293.3 L2478.9 1295.1 L2481.6 1295.2 L2484.2 1297.0 L2486.9 1299.9 L2489.6 1292.3 L2492.2 1291.4 L2494.9 1290.2 L2497.5 1295.3 L2500.2 1296.8 L2502.8 1292.6 L2505.5 1292.5 L2508.2 1288.8 L2510.8 1282.6 L2513.5 1289.6 L2516.1 1291.0 L2518.8 1284.9 L2521.5 1285.0 L2524.1 1287.6 L2526.8 1288.9 L2529.4 1289.1 L2532.1 1286.4 L2534.8 1282.5 L2537.4 1278.3 L2540.1 1283.3 L2542.7 1276.8 L2545.4 1272.8 L2548.1 1278.4 L2550.7 1277.3 L2553.4 1275.9 L2556.0 1273.4 L2558.7 1280.5 L2561.4 1268.8 L2564.0 1271.1 L2566.7 1273.8 L2569.3 1277.6 L2572.0 1274.8 L2574.7 1276.9 L2577.3 1275.9 L2580.0 1273.1 L2582.6 1269.2 L2585.3 1269.4 L2587.9 1263.6 L2590.6 1267.5 L2593.3 1267.1 L2595.9 1261.6 L2598.6 1261.9 L2601.2 1265.9 L2603.9 1261.6 L2606.6 1258.1 L2609.2 1264.3 L2611.9 1263.8 L2614.5 1258.2 L2617.2 1253.2 L2619.9 1255.8 L2622.5 1246.6 L2625.2 1240.2 L2627.8 1237.7 L2630.5 1254.0 L2633.2 1258.3 L2635.8 1243.1 L2638.5 1244.6 L2641.1 1241.7 L2643.8 1238.4 L2646.5 1221.2 L2649.1 1234.2 L2651.8 1238.1 L2654.4 1225.7 L2657.1 1225.4 L2659.8 1231.4 L2662.4 1234.4 L2665.1 1239.8 L2667.7 1228.6 L2670.4 1238.4 L2673.0 1237.8 L2675.7 1229.5 L2678.4 1227.7 L2681.0 1217.7 L2683.7 1222.1 L2686.3 1227.5 L2689.0 1220.3 L2691.7 1215.7 L2694.3 1226.5 L2697.0 1215.3 L2699.6 1217.8 L2702.3 1215.0 L2705.0 1206.4 L2707.6 1214.6 L2710.3 1207.8 L2712.9 1210.1 L2715.6 1213.1 L2718.3 1213.9 L2720.9 1220.1 L2723.6 1205.0 L2726.2 1214.1 L2728.9 1216.5 L2731.6 1201.4 L2734.2 1209.1 L2736.9 1121.4 L2739.5 1229.1 L2742.2 1219.2 L2744.8 1218.1 L2747.5 1220.3 L2750.2 1216.4 L2752.8 1214.9 L2755.5 1224.0 L2758.1 1213.8 L2760.8 1197.1 L2763.5 1217.2 L2766.1 1211.6 L2768.8 1223.0 L2771.4 1222.0 L2774.1 1219.6 L2776.8 1218.6 L2779.4 1226.6 L2782.1 1230.1 L2784.7 1236.1 L2787.4 1233.0 L2790.1 1223.0 L2792.7 1235.3 L2795.4 1210.8 L2798.0 1210.9 L2800.7 1227.3 L2803.4 1226.9 L2806.0 1225.4 L2808.7 1219.5 L2811.3 1221.3 L2814.0 1221.5 L2816.7 1220.1 L2819.3 1220.7 L2822.0 1230.0 L2824.6 1231.5 L2827.3 1220.3 L2829.9 1221.9 L2832.6 1225.6 L2835.3 1223.7 L2837.9 1210.2 L2840.6 1209.5 L2843.2 1231.6 L2845.9 1210.5 L2848.6 1203.2 L2851.2 1218.3 L2853.9 1219.4 L2856.5 1215.7 L2859.2 1209.4 L2861.9 1214.2 L2864.5 1230.4 L2867.2 1223.6 L2869.8 1222.0 L2872.5 1233.3 L2872.5 1336.6 L2106.6 1336.6Z" fill="#f58c46"/><path d="M2106.6 1286.0 L2109.3 1202.9 L2111.9 1206.9 L2114.6 1221.6 L2117.2 1226.4 L2119.9 1227.1 L2122.6 1225.4 L2125.2 1224.3 L2127.9 1206.9 L2130.5 1221.7 L2133.2 1236.2 L2135.9 1224.1 L2138.5 1234.4 L2141.2 1231.5 L2143.8 1232.6 L2146.5 1235.4 L2149.2 1228.1 L2151.8 1233.4 L2154.5 1239.0 L2157.1 1226.4 L2159.8 1233.7 L2162.4 1204.6 L2165.1 1240.0 L2167.8 1243.1 L2170.4 1232.2 L2173.1 1232.9 L2175.7 1220.0 L2178.4 1217.4 L2181.1 1223.0 L2183.7 1236.9 L2186.4 1242.2 L2189.0 1248.6 L2191.7 1245.2 L2194.4 1243.2 L2197.0 1225.6 L2199.7 1240.3 L2202.3 1245.1 L2205.0 1248.9 L2207.7 1251.2 L2210.3 1249.9 L2213.0 1248.5 L2215.6 1252.0 L2218.3 1247.7 L2221.0 1241.2 L2223.6 1252.6 L2226.3 1256.2 L2228.9 1257.4 L2231.6 1240.3 L2234.2 1250.8 L2236.9 1262.7 L2239.6 1258.6 L2242.2 1252.1 L2244.9 1255.1 L2247.5 1255.9 L2250.2 1246.0 L2252.9 1257.9 L2255.5 1263.7 L2258.2 1263.7 L2260.8 1266.8 L2263.5 1263.3 L2266.2 1265.4 L2268.8 1266.1 L2271.5 1256.6 L2274.1 1260.6 L2276.8 1260.6 L2279.5 1263.1 L2282.1 1268.9 L2284.8 1268.7 L2287.4 1194.6 L2290.1 1264.2 L2292.8 1271.3 L2295.4 1263.9 L2298.1 1266.4 L2300.7 1266.9 L2303.4 1269.1 L2306.1 1268.0 L2308.7 1269.5 L2311.4 1270.7 L2314.0 1269.3 L2316.7 1265.0 L2319.3 1262.9 L2322.0 1272.0 L2324.7 1271.3 L2327.3 1276.8 L2330.0 1271.2 L2332.6 1276.1 L2335.3 1274.3 L2338.0 1264.7 L2340.6 1262.7 L2343.3 1269.4 L2345.9 1278.4 L2348.6 1271.4 L2351.3 1273.9 L2353.9 1279.9 L2356.6 1281.3 L2359.2 1280.1 L2361.9 1276.0 L2364.6 1284.4 L2367.2 1282.3 L2369.9 1279.3 L2372.5 1285.2 L2375.2 1288.1 L2377.9 1277.3 L2380.5 1280.5 L2383.2 1286.2 L2385.8 1286.8 L2388.5 1288.1 L2391.2 1285.8 L2393.8 1283.5 L2396.5 1289.1 L2399.1 1287.8 L2401.8 1287.9 L2404.4 1284.3 L2407.1 1289.9 L2409.8 1287.7 L2412.4 1285.7 L2415.1 1287.5 L2417.7 1288.8 L2420.4 1295.5 L2423.1 1295.5 L2425.7 1294.9 L2428.4 1297.3 L2431.0 1298.3 L2433.7 1293.3 L2436.4 1295.2 L2439.0 1294.8 L2441.7 1297.3 L2444.3 1294.5 L2447.0 1298.9 L2449.7 1298.4 L2452.3 1297.6 L2455.0 1301.3 L2457.6 1300.6 L2460.3 1301.2 L2463.0 1300.3 L2465.6 1300.9 L2468.3 1301.0 L2470.9 1298.0 L2473.6 1298.6 L2476.3 1300.8 L2478.9 1299.9 L2481.6 1298.8 L2484.2 1300.0 L2486.9 1303.2 L2489.6 1295.3 L2492.2 1295.7 L2494.9 1293.8 L2497.5 1298.5 L2500.2 1301.4 L2502.8 1296.8 L2505.5 1295.6 L2508.2 1291.7 L2510.8 1287.5 L2513.5 1294.4 L2516.1 1295.3 L2518.8 1289.7 L2521.5 1290.3 L2524.1 1294.2 L2526.8 1294.2 L2529.4 1293.1 L2532.1 1290.2 L2534.8 1287.4 L2537.4 1282.3 L2540.1 1286.8 L2542.7 1282.2 L2545.4 1278.2 L2548.1 1282.8 L2550.7 1285.1 L2553.4 1281.9 L2556.0 1277.1 L2558.7 1285.0 L2561.4 1273.6 L2564.0 1274.8 L2566.7 1279.2 L2569.3 1283.2 L2572.0 1278.7 L2574.7 1282.3 L2577.3 1281.0 L2580.0 1278.3 L2582.6 1273.6 L2585.3 1275.0 L2587.9 1271.3 L2590.6 1273.7 L2593.3 1272.0 L2595.9 1269.6 L2598.6 1270.1 L2601.2 1271.7 L2603.9 1270.4 L2606.6 1265.3 L2609.2 1269.5 L2611.9 1269.6 L2614.5 1263.4 L2617.2 1257.3 L2619.9 1260.4 L2622.5 1258.5 L2625.2 1251.6 L2627.8 1247.5 L2630.5 1260.5 L2633.2 1262.8 L2635.8 1250.6 L2638.5 1251.1 L2641.1 1246.0 L2643.8 1247.1 L2646.5 1230.4 L2649.1 1241.6 L2651.8 1244.2 L2654.4 1231.4 L2657.1 1230.4 L2659.8 1236.9 L2662.4 1242.6 L2665.1 1245.6 L2667.7 1236.6 L2670.4 1244.8 L2673.0 1243.7 L2675.7 1235.1 L2678.4 1232.5 L2681.0 1223.0 L2683.7 1227.8 L2686.3 1235.9 L2689.0 1226.7 L2691.7 1224.7 L2694.3 1234.0 L2697.0 1221.8 L2699.6 1224.1 L2702.3 1221.7 L2705.0 1214.2 L2707.6 1222.1 L2710.3 1215.4 L2712.9 1216.8 L2715.6 1219.9 L2718.3 1221.2 L2720.9 1228.7 L2723.6 1217.2 L2726.2 1225.6 L2728.9 1225.5 L2731.6 1213.2 L2734.2 1217.9 L2736.9 1128.5 L2739.5 1238.1 L2742.2 1226.8 L2744.8 1225.8 L2747.5 1229.5 L2750.2 1226.2 L2752.8 1225.0 L2755.5 1231.1 L2758.1 1223.5 L2760.8 1211.2 L2763.5 1227.2 L2766.1 1223.1 L2768.8 1232.5 L2771.4 1228.8 L2774.1 1231.2 L2776.8 1227.6 L2779.4 1233.8 L2782.1 1238.7 L2784.7 1243.8 L2787.4 1240.4 L2790.1 1228.7 L2792.7 1242.1 L2795.4 1222.2 L2798.0 1219.1 L2800.7 1235.4 L2803.4 1234.3 L2806.0 1232.7 L2808.7 1229.1 L2811.3 1230.6 L2814.0 1228.1 L2816.7 1231.1 L2819.3 1230.2 L2822.0 1238.0 L2824.6 1242.7 L2827.3 1228.7 L2829.9 1229.7 L2832.6 1235.2 L2835.3 1232.1 L2837.9 1219.7 L2840.6 1222.4 L2843.2 1240.5 L2845.9 1218.9 L2848.6 1212.8 L2851.2 1229.2 L2853.9 1233.0 L2856.5 1230.4 L2859.2 1219.5 L2861.9 1223.1 L2864.5 1237.2 L2867.2 1233.4 L2869.8 1235.1 L2872.5 1244.7 L2872.5 1336.6 L2106.6 1336.6Z" fill="#e9626e"/><path d="M2106.6 1293.8 L2109.3 1222.4 L2111.9 1227.6 L2114.6 1242.6 L2117.2 1245.1 L2119.9 1244.3 L2122.6 1246.3 L2125.2 1243.9 L2127.9 1229.2 L2130.5 1243.6 L2133.2 1254.4 L2135.9 1241.4 L2138.5 1250.3 L2141.2 1247.0 L2143.8 1249.2 L2146.5 1251.4 L2149.2 1243.7 L2151.8 1249.8 L2154.5 1256.3 L2157.1 1243.2 L2159.8 1250.1 L2162.4 1227.8 L2165.1 1258.8 L2167.8 1257.1 L2170.4 1249.3 L2173.1 1251.3 L2175.7 1239.3 L2178.4 1235.0 L2181.1 1244.8 L2183.7 1255.0 L2186.4 1258.8 L2189.0 1264.5 L2191.7 1265.7 L2194.4 1260.5 L2197.0 1243.6 L2199.7 1257.8 L2202.3 1265.7 L2205.0 1267.2 L2207.7 1266.3 L2210.3 1266.7 L2213.0 1262.6 L2215.6 1264.9 L2218.3 1259.9 L2221.0 1264.3 L2223.6 1272.6 L2226.3 1272.2 L2228.9 1270.5 L2231.6 1260.3 L2234.2 1266.4 L2236.9 1274.3 L2239.6 1273.6 L2242.2 1264.8 L2244.9 1269.4 L2247.5 1268.7 L2250.2 1265.4 L2252.9 1273.0 L2255.5 1276.2 L2258.2 1275.9 L2260.8 1278.0 L2263.5 1276.2 L2266.2 1277.2 L2268.8 1276.6 L2271.5 1272.0 L2274.1 1276.3 L2276.8 1273.5 L2279.5 1274.1 L2282.1 1279.7 L2284.8 1281.9 L2287.4 1206.5 L2290.1 1276.2 L2292.8 1282.1 L2295.4 1278.0 L2298.1 1279.4 L2300.7 1280.3 L2303.4 1284.0 L2306.1 1282.6 L2308.7 1283.8 L2311.4 1283.5 L2314.0 1281.7 L2316.7 1283.0 L2319.3 1283.9 L2322.0 1289.1 L2324.7 1285.3 L2327.3 1288.0 L2330.0 1284.1 L2332.6 1287.8 L2335.3 1287.8 L2338.0 1283.9 L2340.6 1278.6 L2343.3 1281.3 L2345.9 1290.1 L2348.6 1284.1 L2351.3 1288.7 L2353.9 1291.2 L2356.6 1291.0 L2359.2 1291.0 L2361.9 1292.3 L2364.6 1296.8 L2367.2 1292.5 L2369.9 1291.2 L2372.5 1296.7 L2375.2 1298.6 L2377.9 1289.2 L2380.5 1293.5 L2383.2 1297.1 L2385.8 1297.9 L2388.5 1299.4 L2391.2 1296.9 L2393.8 1294.0 L2396.5 1300.8 L2399.1 1298.9 L2401.8 1301.5 L2404.4 1298.4 L2407.1 1300.8 L2409.8 1300.1 L2412.4 1301.8 L2415.1 1303.0 L2417.7 1300.3 L2420.4 1304.2 L2423.1 1303.6 L2425.7 1304.3 L2428.4 1305.4 L2431.0 1308.1 L2433.7 1302.5 L2436.4 1304.4 L2439.0 1305.6 L2441.7 1306.3 L2444.3 1306.6 L2447.0 1307.9 L2449.7 1306.2 L2452.3 1307.4 L2455.0 1310.4 L2457.6 1309.1 L2460.3 1309.9 L2463.0 1308.1 L2465.6 1309.7 L2468.3 1308.9 L2470.9 1305.3 L2473.6 1306.1 L2476.3 1309.7 L2478.9 1309.8 L2481.6 1306.9 L2484.2 1308.0 L2486.9 1309.7 L2489.6 1307.5 L2492.2 1308.5 L2494.9 1303.5 L2497.5 1306.3 L2500.2 1308.4 L2502.8 1302.9 L2505.5 1301.4 L2508.2 1301.3 L2510.8 1295.4 L2513.5 1301.3 L2516.1 1303.2 L2518.8 1296.8 L2521.5 1298.6 L2524.1 1301.9 L2526.8 1300.7 L2529.4 1301.3 L2532.1 1300.2 L2534.8 1296.0 L2537.4 1289.4 L2540.1 1293.3 L2542.7 1291.5 L2545.4 1289.9 L2548.1 1292.7 L2550.7 1294.9 L2553.4 1290.8 L2556.0 1285.7 L2558.7 1293.0 L2561.4 1280.9 L2564.0 1286.5 L2566.7 1292.6 L2569.3 1293.3 L2572.0 1292.5 L2574.7 1294.4 L2577.3 1290.4 L2580.0 1286.8 L2582.6 1285.8 L2585.3 1286.4 L2587.9 1280.3 L2590.6 1284.4 L2593.3 1284.2 L2595.9 1282.1 L2598.6 1282.1 L2601.2 1283.5 L2603.9 1281.2 L2606.6 1277.5 L2609.2 1280.2 L2611.9 1279.3 L2614.5 1275.6 L2617.2 1271.5 L2619.9 1273.5 L2622.5 1272.6 L2625.2 1267.6 L2627.8 1267.4 L2630.5 1274.3 L2633.2 1278.0 L2635.8 1269.7 L2638.5 1263.4 L2641.1 1256.4 L2643.8 1258.5 L2646.5 1241.4 L2649.1 1255.3 L2651.8 1261.7 L2654.4 1247.6 L2657.1 1244.9 L2659.8 1249.6 L2662.4 1255.0 L2665.1 1258.4 L2667.7 1249.6 L2670.4 1260.0 L2673.0 1258.0 L2675.7 1251.5 L2678.4 1246.8 L2681.0 1237.7 L2683.7 1244.0 L2686.3 1249.8 L2689.0 1241.5 L2691.7 1236.5 L2694.3 1246.4 L2697.0 1233.2 L2699.6 1234.8 L2702.3 1234.4 L2705.0 1230.6 L2707.6 1238.6 L2710.3 1231.3 L2712.9 1235.1 L2715.6 1237.3 L2718.3 1235.9 L2720.9 1243.1 L2723.6 1231.5 L2726.2 1240.8 L2728.9 1245.8 L2731.6 1232.4 L2734.2 1238.1 L2736.9 1144.4 L2739.5 1254.4 L2742.2 1246.2 L2744.8 1246.2 L2747.5 1248.4 L2750.2 1243.3 L2752.8 1242.3 L2755.5 1248.8 L2758.1 1240.1 L2760.8 1233.9 L2763.5 1248.1 L2766.1 1239.6 L2768.8 1248.9 L2771.4 1244.4 L2774.1 1244.8 L2776.8 1244.4 L2779.4 1251.2 L2782.1 1255.6 L2784.7 1259.1 L2787.4 1254.8 L2790.1 1254.8 L2792.7 1260.7 L2795.4 1243.0 L2798.0 1237.6 L2800.7 1250.2 L2803.4 1252.7 L2806.0 1249.6 L2808.7 1249.2 L2811.3 1252.3 L2814.0 1249.9 L2816.7 1253.0 L2819.3 1249.8 L2822.0 1255.4 L2824.6 1261.5 L2827.3 1246.6 L2829.9 1245.5 L2832.6 1250.5 L2835.3 1250.5 L2837.9 1239.5 L2840.6 1239.2 L2843.2 1258.2 L2845.9 1236.0 L2848.6 1231.4 L2851.2 1249.7 L2853.9 1250.3 L2856.5 1249.5 L2859.2 1242.4 L2861.9 1242.2 L2864.5 1256.4 L2867.2 1252.4 L2869.8 1252.2 L2872.5 1259.5 L2872.5 1336.6 L2106.6 1336.6Z" fill="#b85586"/><path d="M2106.6 1304.0 L2109.3 1250.1 L2111.9 1252.9 L2114.6 1261.6 L2117.2 1263.5 L2119.9 1263.5 L2122.6 1268.5 L2125.2 1262.8 L2127.9 1250.4 L2130.5 1265.6 L2133.2 1271.4 L2135.9 1259.2 L2138.5 1267.6 L2141.2 1266.5 L2143.8 1267.9 L2146.5 1271.9 L2149.2 1270.0 L2151.8 1269.3 L2154.5 1271.4 L2157.1 1267.3 L2159.8 1272.2 L2162.4 1275.4 L2165.1 1275.0 L2167.8 1277.7 L2170.4 1275.3 L2173.1 1274.7 L2175.7 1259.0 L2178.4 1256.7 L2181.1 1264.9 L2183.7 1271.3 L2186.4 1277.2 L2189.0 1280.8 L2191.7 1280.5 L2194.4 1280.6 L2197.0 1274.2 L2199.7 1280.2 L2202.3 1281.3 L2205.0 1282.8 L2207.7 1282.7 L2210.3 1286.0 L2213.0 1280.0 L2215.6 1278.5 L2218.3 1277.0 L2221.0 1282.3 L2223.6 1286.5 L2226.3 1286.3 L2228.9 1284.9 L2231.6 1278.8 L2234.2 1282.1 L2236.9 1288.7 L2239.6 1291.1 L2242.2 1284.9 L2244.9 1285.1 L2247.5 1283.9 L2250.2 1285.3 L2252.9 1288.2 L2255.5 1291.5 L2258.2 1290.9 L2260.8 1290.8 L2263.5 1292.0 L2266.2 1293.9 L2268.8 1291.5 L2271.5 1288.3 L2274.1 1291.0 L2276.8 1287.8 L2279.5 1292.9 L2282.1 1294.7 L2284.8 1294.9 L2287.4 1250.0 L2290.1 1289.8 L2292.8 1294.9 L2295.4 1291.7 L2298.1 1294.2 L2300.7 1295.3 L2303.4 1298.0 L2306.1 1297.2 L2308.7 1295.3 L2311.4 1296.0 L2314.0 1296.3 L2316.7 1299.8 L2319.3 1297.8 L2322.0 1299.7 L2324.7 1295.4 L2327.3 1299.8 L2330.0 1295.6 L2332.6 1297.7 L2335.3 1298.1 L2338.0 1299.7 L2340.6 1300.7 L2343.3 1298.1 L2345.9 1301.1 L2348.6 1299.2 L2351.3 1301.2 L2353.9 1303.0 L2356.6 1303.7 L2359.2 1304.9 L2361.9 1305.9 L2364.6 1306.5 L2367.2 1301.7 L2369.9 1303.4 L2372.5 1307.1 L2375.2 1309.6 L2377.9 1301.2 L2380.5 1305.2 L2383.2 1307.1 L2385.8 1306.9 L2388.5 1309.3 L2391.2 1311.3 L2393.8 1306.9 L2396.5 1310.0 L2399.1 1311.0 L2401.8 1312.0 L2404.4 1309.5 L2407.1 1312.1 L2409.8 1311.0 L2412.4 1312.7 L2415.1 1315.3 L2417.7 1310.2 L2420.4 1312.3 L2423.1 1312.8 L2425.7 1314.8 L2428.4 1314.2 L2431.0 1316.5 L2433.7 1312.0 L2436.4 1314.3 L2439.0 1313.6 L2441.7 1313.5 L2444.3 1315.5 L2447.0 1316.2 L2449.7 1314.0 L2452.3 1315.5 L2455.0 1317.0 L2457.6 1316.1 L2460.3 1316.7 L2463.0 1317.4 L2465.6 1317.1 L2468.3 1315.6 L2470.9 1313.5 L2473.6 1314.1 L2476.3 1316.8 L2478.9 1316.7 L2481.6 1316.7 L2484.2 1315.9 L2486.9 1316.4 L2489.6 1315.0 L2492.2 1315.6 L2494.9 1312.0 L2497.5 1314.3 L2500.2 1315.8 L2502.8 1309.7 L2505.5 1308.3 L2508.2 1308.3 L2510.8 1306.9 L2513.5 1309.9 L2516.1 1311.9 L2518.8 1306.9 L2521.5 1306.8 L2524.1 1308.9 L2526.8 1311.2 L2529.4 1312.0 L2532.1 1309.7 L2534.8 1308.0 L2537.4 1303.7 L2540.1 1304.4 L2542.7 1303.2 L2545.4 1302.3 L2548.1 1304.0 L2550.7 1304.4 L2553.4 1300.1 L2556.0 1296.1 L2558.7 1301.9 L2561.4 1289.3 L2564.0 1295.5 L2566.7 1301.5 L2569.3 1303.0 L2572.0 1303.5 L2574.7 1302.6 L2577.3 1301.6 L2580.0 1296.4 L2582.6 1292.9 L2585.3 1294.6 L2587.9 1293.2 L2590.6 1294.7 L2593.3 1292.8 L2595.9 1293.0 L2598.6 1293.3 L2601.2 1295.1 L2603.9 1296.1 L2606.6 1290.0 L2609.2 1291.6 L2611.9 1290.9 L2614.5 1289.7 L2617.2 1290.4 L2619.9 1290.5 L2622.5 1288.6 L2625.2 1280.0 L2627.8 1278.2 L2630.5 1288.3 L2633.2 1290.9 L2635.8 1287.0 L2638.5 1280.3 L2641.1 1277.0 L2643.8 1277.1 L2646.5 1263.8 L2649.1 1274.4 L2651.8 1279.1 L2654.4 1268.0 L2657.1 1269.9 L2659.8 1271.4 L2662.4 1271.2 L2665.1 1273.3 L2667.7 1264.0 L2670.4 1272.2 L2673.0 1275.7 L2675.7 1272.5 L2678.4 1267.0 L2681.0 1265.7 L2683.7 1264.7 L2686.3 1264.9 L2689.0 1259.5 L2691.7 1254.6 L2694.3 1261.3 L2697.0 1247.7 L2699.6 1248.3 L2702.3 1249.2 L2705.0 1246.3 L2707.6 1256.8 L2710.3 1258.4 L2712.9 1256.9 L2715.6 1255.0 L2718.3 1252.8 L2720.9 1260.1 L2723.6 1252.8 L2726.2 1257.4 L2728.9 1264.4 L2731.6 1252.2 L2734.2 1261.0 L2736.9 1268.1 L2739.5 1271.2 L2742.2 1262.2 L2744.8 1261.4 L2747.5 1265.5 L2750.2 1265.3 L2752.8 1265.6 L2755.5 1266.8 L2758.1 1259.9 L2760.8 1260.8 L2763.5 1270.8 L2766.1 1266.4 L2768.8 1267.8 L2771.4 1273.9 L2774.1 1270.8 L2776.8 1267.2 L2779.4 1268.4 L2782.1 1271.2 L2784.7 1275.6 L2787.4 1278.3 L2790.1 1272.0 L2792.7 1275.7 L2795.4 1269.4 L2798.0 1264.4 L2800.7 1273.8 L2803.4 1269.8 L2806.0 1268.5 L2808.7 1269.2 L2811.3 1277.3 L2814.0 1273.5 L2816.7 1274.7 L2819.3 1269.4 L2822.0 1270.4 L2824.6 1278.2 L2827.3 1277.7 L2829.9 1267.0 L2832.6 1265.2 L2835.3 1265.9 L2837.9 1273.4 L2840.6 1267.4 L2843.2 1277.1 L2845.9 1260.9 L2848.6 1260.9 L2851.2 1274.4 L2853.9 1267.0 L2856.5 1266.3 L2859.2 1264.3 L2861.9 1262.9 L2864.5 1272.6 L2867.2 1273.8 L2869.8 1275.7 L2872.5 1280.2 L2872.5 1336.6 L2106.6 1336.6Z" fill="#7a5088"/><path d="M2106.6 1315.5 L2109.3 1291.9 L2111.9 1291.3 L2114.6 1291.9 L2117.2 1291.8 L2119.9 1289.9 L2122.6 1292.9 L2125.2 1287.9 L2127.9 1282.5 L2130.5 1290.6 L2133.2 1291.6 L2135.9 1293.4 L2138.5 1293.8 L2141.2 1293.1 L2143.8 1294.7 L2146.5 1293.2 L2149.2 1295.3 L2151.8 1293.9 L2154.5 1293.3 L2157.1 1294.1 L2159.8 1294.6 L2162.4 1295.9 L2165.1 1297.4 L2167.8 1298.4 L2170.4 1296.9 L2173.1 1297.0 L2175.7 1293.5 L2178.4 1292.9 L2181.1 1297.4 L2183.7 1298.1 L2186.4 1299.2 L2189.0 1300.0 L2191.7 1297.9 L2194.4 1298.7 L2197.0 1299.6 L2199.7 1300.6 L2202.3 1299.2 L2205.0 1300.2 L2207.7 1299.9 L2210.3 1301.2 L2213.0 1301.3 L2215.6 1298.9 L2218.3 1299.7 L2221.0 1300.5 L2223.6 1301.3 L2226.3 1304.4 L2228.9 1304.6 L2231.6 1302.3 L2234.2 1304.8 L2236.9 1305.4 L2239.6 1306.6 L2242.2 1306.0 L2244.9 1306.7 L2247.5 1307.6 L2250.2 1305.3 L2252.9 1305.2 L2255.5 1304.9 L2258.2 1306.5 L2260.8 1304.9 L2263.5 1307.4 L2266.2 1308.1 L2268.8 1308.7 L2271.5 1306.0 L2274.1 1306.1 L2276.8 1309.4 L2279.5 1310.0 L2282.1 1310.1 L2284.8 1310.6 L2287.4 1311.2 L2290.1 1307.8 L2292.8 1308.3 L2295.4 1310.3 L2298.1 1310.1 L2300.7 1310.9 L2303.4 1311.8 L2306.1 1310.5 L2308.7 1311.2 L2311.4 1309.8 L2314.0 1308.3 L2316.7 1311.2 L2319.3 1311.5 L2322.0 1312.0 L2324.7 1311.3 L2327.3 1312.7 L2330.0 1313.4 L2332.6 1313.1 L2335.3 1312.7 L2338.0 1312.9 L2340.6 1314.0 L2343.3 1314.8 L2345.9 1314.7 L2348.6 1313.9 L2351.3 1314.9 L2353.9 1314.3 L2356.6 1316.1 L2359.2 1316.9 L2361.9 1315.8 L2364.6 1316.6 L2367.2 1316.6 L2369.9 1317.7 L2372.5 1318.5 L2375.2 1318.9 L2377.9 1317.7 L2380.5 1319.1 L2383.2 1319.4 L2385.8 1320.4 L2388.5 1320.1 L2391.2 1320.5 L2393.8 1320.9 L2396.5 1320.5 L2399.1 1321.3 L2401.8 1321.6 L2404.4 1321.9 L2407.1 1322.9 L2409.8 1322.5 L2412.4 1321.4 L2415.1 1322.8 L2417.7 1321.5 L2420.4 1323.1 L2423.1 1324.3 L2425.7 1323.8 L2428.4 1323.6 L2431.0 1324.3 L2433.7 1324.4 L2436.4 1324.7 L2439.0 1324.6 L2441.7 1323.8 L2444.3 1324.8 L2447.0 1325.1 L2449.7 1324.3 L2452.3 1325.0 L2455.0 1324.4 L2457.6 1325.2 L2460.3 1325.7 L2463.0 1325.0 L2465.6 1325.2 L2468.3 1324.5 L2470.9 1324.9 L2473.6 1325.0 L2476.3 1325.3 L2478.9 1325.7 L2481.6 1324.3 L2484.2 1324.7 L2486.9 1324.9 L2489.6 1323.9 L2492.2 1323.2 L2494.9 1324.5 L2497.5 1324.6 L2500.2 1323.7 L2502.8 1322.4 L2505.5 1322.5 L2508.2 1322.7 L2510.8 1321.8 L2513.5 1321.6 L2516.1 1321.6 L2518.8 1320.3 L2521.5 1320.4 L2524.1 1320.7 L2526.8 1320.5 L2529.4 1320.1 L2532.1 1319.3 L2534.8 1317.4 L2537.4 1316.5 L2540.1 1315.0 L2542.7 1315.8 L2545.4 1316.2 L2548.1 1315.3 L2550.7 1315.3 L2553.4 1314.3 L2556.0 1313.7 L2558.7 1313.7 L2561.4 1314.3 L2564.0 1311.4 L2566.7 1312.5 L2569.3 1313.3 L2572.0 1312.9 L2574.7 1313.0 L2577.3 1310.5 L2580.0 1306.6 L2582.6 1303.6 L2585.3 1307.4 L2587.9 1308.8 L2590.6 1309.3 L2593.3 1306.4 L2595.9 1306.4 L2598.6 1309.4 L2601.2 1307.7 L2603.9 1308.1 L2606.6 1302.9 L2609.2 1303.2 L2611.9 1303.8 L2614.5 1303.1 L2617.2 1303.7 L2619.9 1304.6 L2622.5 1304.8 L2625.2 1300.1 L2627.8 1299.6 L2630.5 1303.0 L2633.2 1303.0 L2635.8 1303.1 L2638.5 1297.4 L2641.1 1298.5 L2643.8 1299.0 L2646.5 1293.8 L2649.1 1295.1 L2651.8 1297.3 L2654.4 1291.2 L2657.1 1288.6 L2659.8 1291.5 L2662.4 1296.2 L2665.1 1294.7 L2667.7 1293.0 L2670.4 1295.2 L2673.0 1294.9 L2675.7 1294.2 L2678.4 1289.2 L2681.0 1288.2 L2683.7 1290.0 L2686.3 1290.1 L2689.0 1283.8 L2691.7 1279.5 L2694.3 1284.3 L2697.0 1282.2 L2699.6 1283.8 L2702.3 1277.8 L2705.0 1268.8 L2707.6 1283.6 L2710.3 1281.0 L2712.9 1283.0 L2715.6 1286.7 L2718.3 1284.8 L2720.9 1283.7 L2723.6 1281.6 L2726.2 1283.7 L2728.9 1290.1 L2731.6 1284.5 L2734.2 1285.7 L2736.9 1288.4 L2739.5 1291.4 L2742.2 1286.6 L2744.8 1289.9 L2747.5 1288.1 L2750.2 1290.2 L2752.8 1289.2 L2755.5 1291.1 L2758.1 1289.2 L2760.8 1290.9 L2763.5 1292.9 L2766.1 1291.8 L2768.8 1293.1 L2771.4 1294.5 L2774.1 1290.7 L2776.8 1294.8 L2779.4 1296.4 L2782.1 1294.9 L2784.7 1295.4 L2787.4 1298.0 L2790.1 1295.3 L2792.7 1297.3 L2795.4 1294.1 L2798.0 1293.2 L2800.7 1297.4 L2803.4 1298.4 L2806.0 1291.2 L2808.7 1291.6 L2811.3 1297.6 L2814.0 1295.2 L2816.7 1296.4 L2819.3 1298.4 L2822.0 1297.9 L2824.6 1298.3 L2827.3 1300.1 L2829.9 1294.3 L2832.6 1294.0 L2835.3 1295.0 L2837.9 1295.8 L2840.6 1284.6 L2843.2 1293.2 L2845.9 1292.6 L2848.6 1293.4 L2851.2 1296.8 L2853.9 1293.3 L2856.5 1287.9 L2859.2 1293.5 L2861.9 1298.4 L2864.5 1297.3 L2867.2 1292.5 L2869.8 1296.2 L2872.5 1298.0 L2872.5 1336.6 L2106.6 1336.6Z" fill="#444674"/><rect x="2106.6" y="1335.6" width="765.9" height="2" fill="#7c6b8e"/><rect x="2161.6" y="1336.6" width="2" height="10" fill="#7c6b8e"/><rect x="2289.2" y="1336.6" width="2" height="10" fill="#7c6b8e"/><rect x="2416.9" y="1336.6" width="2" height="10" fill="#7c6b8e"/><rect x="2544.6" y="1336.6" width="2" height="10" fill="#7c6b8e"/><rect x="2672.2" y="1336.6" width="2" height="10" fill="#7c6b8e"/><rect x="2799.8" y="1336.6" width="2" height="10" fill="#7c6b8e"/></svg><div class="t r" style="left:45.0px;top:417px;font-size:24px;color:#80708f;">0</div><div class="t r" style="left:30.9px;top:349px;font-size:24px;color:#80708f;letter-spacing:2.16px;">1k</div><div class="t r" style="left:30.9px;top:281px;font-size:24px;color:#80708f;letter-spacing:2.16px;">2k</div><div class="t r" style="left:30.9px;top:213px;font-size:24px;color:#80708f;letter-spacing:2.16px;">3k</div><div class="t r" style="left:30.9px;top:145px;font-size:24px;color:#80708f;letter-spacing:2.16px;">4k</div><div class="t r" style="left:86.3px;top:453px;font-size:24px;color:#80708f;letter-spacing:-0.15px;">4:00 PM</div><div class="t r" style="left:214.0px;top:453px;font-size:24px;color:#80708f;letter-spacing:-0.15px;">8:00 PM</div><div class="t r" style="left:333.4px;top:453px;font-size:24px;color:#80708f;letter-spacing:0.51px;">12:00 AM</div><div class="t r" style="left:468.6px;top:453px;font-size:24px;color:#80708f;letter-spacing:0.32px;">4:00 AM</div><div class="t r" style="left:596.2px;top:453px;font-size:24px;color:#80708f;letter-spacing:0.32px;">8:00 AM</div><div class="t r" style="left:716.8px;top:453px;font-size:24px;color:#80708f;letter-spacing:0.18px;">12:00 PM</div></section><section class="card" style="left:198px;top:1450px;width:884px;height:512px"><div class="t ttl" style="left:32.5px;top:37px;font-size:32px;color:#2b2233;font-weight:700;letter-spacing:0.12px;">High Throughput Transactions</div><div class="" style="position:absolute;left:0px;top:100px;width:880px;height:2px;background:#e0dce5;"></div><div class="" style="position:absolute;left:0px;top:102px;width:880px;height:88px;background:#faf9fb;"></div><div class="" style="position:absolute;left:0px;top:190px;width:880px;height:2px;background:#e0dce5;"></div><div class="t" style="left:40.7px;top:134px;font-size:24px;color:#80708f;font-weight:700;letter-spacing:-0.59px;">COUNT()</div><div class="t" style="left:219.7px;top:134px;font-size:24px;color:#80708f;font-weight:700;letter-spacing:-0.85px;">TRANSACTION</div><div class="" style="position:absolute;left:0px;top:262px;width:880px;height:2px;background:#e0dce5;"></div><div class="" style="position:absolute;left:0px;top:334px;width:880px;height:2px;background:#e0dce5;"></div><div class="" style="position:absolute;left:0px;top:406px;width:880px;height:2px;background:#e0dce5;"></div><div class="" style="position:absolute;left:0px;top:478px;width:880px;height:2px;background:#e0dce5;"></div><div class="" style="position:absolute;left:0px;top:550px;width:880px;height:2px;background:#e0dce5;"></div><div class="t r" style="left:63.1px;top:212px;font-size:28px;color:#3e3446;letter-spacing:1.78px;">367m</div><div class="t r" style="left:219.7px;top:212px;font-size:28px;color:#2562d4;letter-spacing:1.10px;">sentry.tasks.process_buffer.process_incr</div><div class="t r" style="left:63.1px;top:284px;font-size:28px;color:#3e3446;letter-spacing:2.47px;">114m</div><div class="t r" style="left:219.7px;top:284px;font-size:28px;color:#2562d4;letter-spacing:1.61px;">/api/0/internal/rpc/{service_name}/{method_name}/</div><div class="t r" style="left:63.1px;top:356px;font-size:28px;color:#3e3446;letter-spacing:1.78px;">109m</div><div class="t r" style="left:219.7px;top:356px;font-size:28px;color:#2562d4;letter-spacing:1.45px;">/api/0/projects/{organization_id_or_slug}/{project_id_or_slug}/</div><div class="t r" style="left:80.5px;top:428px;font-size:28px;color:#3e3446;letter-spacing:1.76px;">76m</div><div class="t r" style="left:219.7px;top:428px;font-size:28px;color:#2562d4;letter-spacing:1.42px;">/{organization_slug}/</div></section><section class="card" style="left:1114px;top:1450px;width:884px;height:512px"><div class="t ttl" style="left:32.5px;top:37px;font-size:32px;color:#2b2233;font-weight:700;letter-spacing:0.09px;">High Throughput Transactions</div><div class="" style="position:absolute;left:32.40000000000009px;top:83px;width:16px;height:16px;border-radius:8px;background:#444674;"></div><div class="t r" style="left:58.2px;top:80px;font-size:22px;color:#3e3446;letter-spacing:0.86px;">sentry.tasks.process_buffer.process_incr</div><div class="" style="position:absolute;left:513.3px;top:83px;width:16px;height:16px;border-radius:8px;background:#7a5088;"></div><div class="t r" style="left:539.5px;top:80px;font-size:22px;color:#3e3446;letter-spacing:1.56px;width:171.5px;overflow:hidden;">/api/0/internal/rpc/{service_name}/{method_name}/</div><svg class="ic" style="left:737.8px;top:76.0px" width="18" height="30" viewBox="0 0 18 30"><path d="M18 0V30L0 15Z" fill="#aaa5b3"/></svg><div class="t r" style="left:776.4px;top:80px;font-size:22px;color:#333;letter-spacing:0.75px;">1/6</div><svg class="ic" style="left:830.0px;top:76.0px" width="18" height="30" viewBox="0 0 18 30"><path d="M0 0V30L18 15Z" fill="#2f2c43"/></svg><svg class="chart" style="left:0;top:0" width="880" height="508" viewBox="1116 1452 880 508"><rect x="1199.7" y="1840.6" width="756.5" height="2" fill="#f7f6f9"/><rect x="1199.7" y="1801.9" width="756.5" height="2" fill="#f7f6f9"/><rect x="1199.7" y="1763.1" width="756.5" height="2" fill="#f7f6f9"/><rect x="1199.7" y="1724.4" width="756.5" height="2" fill="#f7f6f9"/><rect x="1199.7" y="1685.6" width="756.5" height="2" fill="#f7f6f9"/><rect x="1199.7" y="1646.8" width="756.5" height="2" fill="#f7f6f9"/><rect x="1199.7" y="1608.1" width="756.5" height="2" fill="#f7f6f9"/><path d="M1199.7 1793.0 L1202.3 1702.0 L1205.0 1700.2 L1207.6 1707.7 L1210.2 1702.6 L1212.8 1677.0 L1215.5 1699.7 L1218.1 1706.3 L1220.7 1715.7 L1223.3 1688.7 L1226.0 1699.4 L1228.6 1701.6 L1231.2 1675.7 L1233.8 1683.9 L1236.5 1709.8 L1239.1 1698.1 L1241.7 1686.7 L1244.4 1687.7 L1247.0 1703.8 L1249.6 1679.3 L1252.2 1678.4 L1254.9 1703.0 L1257.5 1708.3 L1260.1 1704.9 L1262.7 1687.3 L1265.4 1683.5 L1268.0 1690.0 L1270.6 1682.7 L1273.2 1694.8 L1275.9 1695.6 L1278.5 1712.0 L1281.1 1717.8 L1283.8 1707.0 L1286.4 1690.5 L1289.0 1665.3 L1291.6 1699.7 L1294.3 1719.2 L1296.9 1708.1 L1299.5 1728.4 L1302.1 1717.0 L1304.8 1721.7 L1307.4 1719.3 L1310.0 1717.4 L1312.6 1692.4 L1315.3 1713.9 L1317.9 1725.6 L1320.5 1718.5 L1323.2 1723.3 L1325.8 1727.4 L1328.4 1728.7 L1331.0 1719.9 L1333.7 1716.9 L1336.3 1671.1 L1338.9 1713.4 L1341.5 1723.4 L1344.2 1727.0 L1346.8 1710.6 L1349.4 1737.8 L1352.1 1721.5 L1354.7 1725.8 L1357.3 1705.7 L1359.9 1669.2 L1362.6 1705.1 L1365.2 1735.3 L1367.8 1720.8 L1370.4 1722.1 L1373.1 1725.4 L1375.7 1730.8 L1378.3 1731.3 L1380.9 1717.3 L1383.6 1694.4 L1386.2 1728.0 L1388.8 1738.2 L1391.5 1720.1 L1394.1 1719.9 L1396.7 1722.0 L1399.3 1725.3 L1402.0 1722.9 L1404.6 1707.4 L1407.2 1663.3 L1409.8 1714.3 L1412.5 1731.7 L1415.1 1735.5 L1417.7 1727.5 L1420.3 1736.2 L1423.0 1731.4 L1425.6 1722.4 L1428.2 1724.1 L1430.9 1692.4 L1433.5 1715.9 L1436.1 1746.9 L1438.7 1745.2 L1441.4 1733.7 L1444.0 1742.2 L1446.6 1735.1 L1449.2 1735.0 L1451.9 1724.0 L1454.5 1665.3 L1457.1 1714.8 L1459.7 1737.2 L1462.4 1749.4 L1465.0 1745.8 L1467.6 1749.1 L1470.3 1737.3 L1472.9 1748.8 L1475.5 1739.1 L1478.1 1698.2 L1480.8 1735.1 L1483.4 1753.5 L1486.0 1751.6 L1488.6 1752.3 L1491.3 1747.7 L1493.9 1746.1 L1496.5 1749.9 L1499.1 1740.5 L1501.8 1700.2 L1504.4 1741.9 L1507.0 1744.1 L1509.7 1748.1 L1512.3 1748.4 L1514.9 1763.8 L1517.5 1735.3 L1520.2 1740.4 L1522.8 1738.2 L1525.4 1729.2 L1528.0 1741.5 L1530.7 1733.9 L1533.3 1755.6 L1535.9 1748.4 L1538.5 1750.3 L1541.2 1754.0 L1543.8 1753.8 L1546.4 1739.0 L1549.1 1669.2 L1551.7 1741.8 L1554.3 1750.0 L1556.9 1756.7 L1559.6 1766.6 L1562.2 1774.1 L1564.8 1762.9 L1567.4 1759.7 L1570.1 1741.3 L1572.7 1665.3 L1575.3 1734.6 L1578.0 1760.7 L1580.6 1764.8 L1583.2 1756.7 L1585.8 1756.1 L1588.5 1750.2 L1591.1 1746.8 L1593.7 1736.8 L1596.3 1692.4 L1599.0 1729.1 L1601.6 1744.9 L1604.2 1750.0 L1606.8 1745.3 L1609.5 1752.6 L1612.1 1747.4 L1614.7 1750.3 L1617.4 1743.6 L1620.0 1702.1 L1622.6 1739.3 L1625.2 1748.5 L1627.9 1760.8 L1630.5 1747.4 L1633.1 1747.8 L1635.7 1756.8 L1638.4 1755.9 L1641.0 1735.4 L1643.6 1675.0 L1646.2 1732.2 L1648.9 1760.0 L1651.5 1762.4 L1654.1 1757.4 L1656.8 1745.4 L1659.4 1758.2 L1662.0 1761.6 L1664.6 1746.9 L1667.3 1704.0 L1669.9 1738.1 L1672.5 1760.2 L1675.1 1755.1 L1677.8 1754.9 L1680.4 1753.3 L1683.0 1753.8 L1685.6 1747.3 L1688.3 1737.0 L1690.9 1704.0 L1693.5 1727.3 L1696.2 1756.2 L1698.8 1754.7 L1701.4 1739.1 L1704.0 1743.0 L1706.7 1744.3 L1709.3 1740.2 L1711.9 1713.8 L1714.5 1647.8 L1717.2 1718.2 L1719.8 1743.0 L1722.4 1740.5 L1725.0 1738.9 L1727.7 1724.8 L1730.3 1729.6 L1732.9 1726.8 L1735.6 1711.9 L1738.2 1647.8 L1740.8 1715.6 L1743.4 1723.3 L1746.1 1720.7 L1748.7 1728.6 L1751.3 1730.8 L1753.9 1718.9 L1756.6 1726.7 L1759.2 1708.8 L1761.8 1655.6 L1764.4 1707.4 L1767.1 1715.6 L1769.7 1697.4 L1772.3 1714.2 L1775.0 1702.0 L1777.6 1715.4 L1780.2 1704.7 L1782.8 1682.5 L1785.5 1613.0 L1788.1 1673.5 L1790.7 1680.3 L1793.3 1697.2 L1796.0 1683.3 L1798.6 1692.0 L1801.2 1689.6 L1803.8 1700.4 L1806.5 1687.4 L1809.1 1640.1 L1811.7 1688.9 L1814.4 1699.8 L1817.0 1709.0 L1819.6 1701.2 L1822.2 1700.7 L1824.9 1688.4 L1827.5 1690.0 L1830.1 1682.4 L1832.7 1628.5 L1835.4 1682.9 L1838.0 1699.4 L1840.6 1707.4 L1843.3 1712.5 L1845.9 1719.9 L1848.5 1706.1 L1851.1 1690.7 L1853.8 1686.7 L1856.4 1624.6 L1859.0 1683.4 L1861.6 1702.0 L1864.3 1699.7 L1866.9 1721.5 L1869.5 1707.0 L1872.1 1702.8 L1874.8 1706.4 L1877.4 1684.3 L1880.0 1649.8 L1882.7 1685.6 L1885.3 1690.6 L1887.9 1706.3 L1890.5 1703.8 L1893.2 1706.1 L1895.8 1697.4 L1898.4 1720.3 L1901.0 1714.6 L1903.7 1705.0 L1906.3 1695.4 L1908.9 1697.4 L1911.5 1708.4 L1914.2 1688.5 L1916.8 1700.0 L1919.4 1705.5 L1922.1 1695.7 L1924.7 1684.4 L1927.3 1671.1 L1929.9 1701.0 L1932.6 1702.5 L1935.2 1696.8 L1937.8 1689.3 L1940.4 1704.9 L1943.1 1693.9 L1945.7 1697.8 L1948.3 1675.0 L1950.9 1698.1 L1953.6 1698.0 L1956.2 1706.7 L1956.2 1880.4 L1199.7 1880.4Z" fill="#f2b712"/><path d="M1199.7 1833.1 L1202.3 1778.3 L1205.0 1777.9 L1207.6 1775.3 L1210.2 1775.9 L1212.8 1776.0 L1215.5 1774.8 L1218.1 1774.6 L1220.7 1797.6 L1223.3 1779.0 L1226.0 1771.1 L1228.6 1773.6 L1231.2 1774.8 L1233.8 1771.5 L1236.5 1773.5 L1239.1 1773.1 L1241.7 1773.0 L1244.4 1796.5 L1247.0 1766.7 L1249.6 1763.4 L1252.2 1760.3 L1254.9 1764.6 L1257.5 1761.2 L1260.1 1762.8 L1262.7 1763.2 L1265.4 1761.9 L1268.0 1759.0 L1270.6 1790.6 L1273.2 1770.9 L1275.9 1767.4 L1278.5 1768.3 L1281.1 1769.8 L1283.8 1767.0 L1286.4 1791.6 L1289.0 1773.3 L1291.6 1763.9 L1294.3 1765.9 L1296.9 1762.7 L1299.5 1764.5 L1302.1 1768.7 L1304.8 1767.2 L1307.4 1789.0 L1310.0 1772.5 L1312.6 1766.0 L1315.3 1768.4 L1317.9 1767.1 L1320.5 1769.5 L1323.2 1765.8 L1325.8 1798.2 L1328.4 1775.1 L1331.0 1776.2 L1333.7 1772.9 L1336.3 1773.1 L1338.9 1771.2 L1341.5 1797.6 L1344.2 1779.8 L1346.8 1778.0 L1349.4 1774.9 L1352.1 1776.4 L1354.7 1772.9 L1357.3 1776.0 L1359.9 1778.9 L1362.6 1776.4 L1365.2 1796.7 L1367.8 1786.7 L1370.4 1786.1 L1373.1 1784.4 L1375.7 1785.7 L1378.3 1785.6 L1380.9 1784.5 L1383.6 1785.7 L1386.2 1783.6 L1388.8 1809.0 L1391.5 1784.9 L1394.1 1780.5 L1396.7 1778.3 L1399.3 1777.3 L1402.0 1783.2 L1404.6 1783.1 L1407.2 1782.6 L1409.8 1780.5 L1412.5 1781.2 L1415.1 1807.7 L1417.7 1788.6 L1420.3 1786.7 L1423.0 1784.5 L1425.6 1784.1 L1428.2 1785.3 L1430.9 1783.1 L1433.5 1784.8 L1436.1 1786.9 L1438.7 1805.8 L1441.4 1788.9 L1444.0 1783.0 L1446.6 1783.6 L1449.2 1783.3 L1451.9 1783.9 L1454.5 1784.8 L1457.1 1804.4 L1459.7 1791.7 L1462.4 1788.8 L1465.0 1788.9 L1467.6 1789.8 L1470.3 1791.4 L1472.9 1813.6 L1475.5 1796.0 L1478.1 1795.2 L1480.8 1795.5 L1483.4 1795.4 L1486.0 1795.4 L1488.6 1796.0 L1491.3 1819.3 L1493.9 1791.4 L1496.5 1790.4 L1499.1 1789.7 L1501.8 1790.3 L1504.4 1791.7 L1507.0 1790.7 L1509.7 1790.6 L1512.3 1811.5 L1514.9 1790.9 L1517.5 1793.2 L1520.2 1806.5 L1522.8 1802.0 L1525.4 1801.0 L1528.0 1809.6 L1530.7 1799.9 L1533.3 1796.0 L1535.9 1798.3 L1538.5 1798.0 L1541.2 1798.2 L1543.8 1812.7 L1546.4 1800.8 L1549.1 1798.3 L1551.7 1808.8 L1554.3 1807.7 L1556.9 1804.8 L1559.6 1803.3 L1562.2 1804.7 L1564.8 1802.9 L1567.4 1814.7 L1570.1 1797.9 L1572.7 1797.7 L1575.3 1794.7 L1578.0 1812.6 L1580.6 1797.8 L1583.2 1792.9 L1585.8 1795.5 L1588.5 1792.9 L1591.1 1805.5 L1593.7 1798.8 L1596.3 1803.1 L1599.0 1798.5 L1601.6 1813.6 L1604.2 1797.4 L1606.8 1796.8 L1609.5 1808.3 L1612.1 1795.5 L1614.7 1796.8 L1617.4 1811.7 L1620.0 1802.5 L1622.6 1801.6 L1625.2 1801.9 L1627.9 1799.0 L1630.5 1798.9 L1633.1 1818.2 L1635.7 1795.4 L1638.4 1795.6 L1641.0 1803.6 L1643.6 1787.4 L1646.2 1787.4 L1648.9 1808.8 L1651.5 1801.5 L1654.1 1799.1 L1656.8 1794.6 L1659.4 1794.8 L1662.0 1792.5 L1664.6 1808.0 L1667.3 1793.9 L1669.9 1792.9 L1672.5 1788.9 L1675.1 1791.8 L1677.8 1789.6 L1680.4 1806.0 L1683.0 1803.6 L1685.6 1799.0 L1688.3 1795.9 L1690.9 1795.8 L1693.5 1794.9 L1696.2 1810.6 L1698.8 1790.3 L1701.4 1788.4 L1704.0 1782.7 L1706.7 1801.4 L1709.3 1781.4 L1711.9 1775.6 L1714.5 1801.6 L1717.2 1790.8 L1719.8 1786.3 L1722.4 1785.3 L1725.0 1785.8 L1727.7 1785.4 L1730.3 1796.6 L1732.9 1781.7 L1735.6 1776.4 L1738.2 1795.4 L1740.8 1770.2 L1743.4 1766.7 L1746.1 1765.7 L1748.7 1766.6 L1751.3 1766.1 L1753.9 1781.3 L1756.6 1771.8 L1759.2 1766.8 L1761.8 1764.7 L1764.4 1762.3 L1767.1 1761.5 L1769.7 1782.8 L1772.3 1775.6 L1775.0 1774.5 L1777.6 1768.9 L1780.2 1767.5 L1782.8 1769.6 L1785.5 1788.5 L1788.1 1767.0 L1790.7 1763.8 L1793.3 1780.8 L1796.0 1761.2 L1798.6 1760.8 L1801.2 1759.9 L1803.8 1756.8 L1806.5 1758.5 L1809.1 1774.2 L1811.7 1768.4 L1814.4 1768.3 L1817.0 1789.3 L1819.6 1771.9 L1822.2 1767.6 L1824.9 1789.4 L1827.5 1759.9 L1830.1 1753.6 L1832.7 1752.2 L1835.4 1754.3 L1838.0 1783.8 L1840.6 1761.3 L1843.3 1759.3 L1845.9 1771.5 L1848.5 1764.4 L1851.1 1763.7 L1853.8 1762.6 L1856.4 1761.4 L1859.0 1784.9 L1861.6 1773.8 L1864.3 1774.6 L1866.9 1780.5 L1869.5 1760.8 L1872.1 1755.1 L1874.8 1750.0 L1877.4 1771.9 L1880.0 1765.3 L1882.7 1763.5 L1885.3 1759.6 L1887.9 1759.6 L1890.5 1783.7 L1893.2 1760.6 L1895.8 1766.6 L1898.4 1760.0 L1901.0 1771.4 L1903.7 1760.1 L1906.3 1760.2 L1908.9 1752.7 L1911.5 1780.8 L1914.2 1762.7 L1916.8 1765.6 L1919.4 1757.1 L1922.1 1779.4 L1924.7 1768.6 L1927.3 1767.2 L1929.9 1765.5 L1932.6 1765.9 L1935.2 1784.9 L1937.8 1762.2 L1940.4 1759.7 L1943.1 1757.8 L1945.7 1771.3 L1948.3 1754.8 L1950.9 1752.3 L1953.6 1773.7 L1956.2 1761.9 L1956.2 1880.4 L1199.7 1880.4Z" fill="#f58c46"/><path d="M1199.7 1836.6 L1202.3 1785.7 L1205.0 1785.0 L1207.6 1782.1 L1210.2 1782.7 L1212.8 1783.2 L1215.5 1782.2 L1218.1 1782.2 L1220.7 1803.7 L1223.3 1786.4 L1226.0 1778.1 L1228.6 1780.7 L1231.2 1781.7 L1233.8 1778.7 L1236.5 1780.9 L1239.1 1780.0 L1241.7 1779.8 L1244.4 1802.1 L1247.0 1773.7 L1249.6 1770.3 L1252.2 1767.4 L1254.9 1771.4 L1257.5 1768.0 L1260.1 1769.7 L1262.7 1770.4 L1265.4 1769.2 L1268.0 1765.9 L1270.6 1796.6 L1273.2 1777.5 L1275.9 1774.1 L1278.5 1774.6 L1281.1 1776.8 L1283.8 1774.0 L1286.4 1797.9 L1289.0 1779.8 L1291.6 1770.8 L1294.3 1772.4 L1296.9 1769.6 L1299.5 1771.4 L1302.1 1775.7 L1304.8 1774.0 L1307.4 1795.1 L1310.0 1778.9 L1312.6 1772.9 L1315.3 1775.1 L1317.9 1773.8 L1320.5 1776.3 L1323.2 1772.7 L1325.8 1803.5 L1328.4 1781.1 L1331.0 1782.9 L1333.7 1779.5 L1336.3 1779.1 L1338.9 1777.3 L1341.5 1803.0 L1344.2 1786.1 L1346.8 1784.4 L1349.4 1781.5 L1352.1 1783.0 L1354.7 1779.9 L1357.3 1781.8 L1359.9 1785.0 L1362.6 1783.0 L1365.2 1801.8 L1367.8 1792.0 L1370.4 1791.9 L1373.1 1790.4 L1375.7 1791.7 L1378.3 1790.8 L1380.9 1789.8 L1383.6 1791.3 L1386.2 1789.1 L1388.8 1813.9 L1391.5 1790.5 L1394.1 1786.6 L1396.7 1783.9 L1399.3 1783.1 L1402.0 1788.8 L1404.6 1789.0 L1407.2 1787.8 L1409.8 1786.2 L1412.5 1786.5 L1415.1 1811.9 L1417.7 1794.2 L1420.3 1792.3 L1423.0 1790.3 L1425.6 1789.6 L1428.2 1790.9 L1430.9 1788.6 L1433.5 1790.4 L1436.1 1792.2 L1438.7 1810.9 L1441.4 1794.1 L1444.0 1789.0 L1446.6 1789.1 L1449.2 1789.0 L1451.9 1789.4 L1454.5 1790.4 L1457.1 1809.6 L1459.7 1797.0 L1462.4 1793.9 L1465.0 1794.3 L1467.6 1795.3 L1470.3 1796.1 L1472.9 1818.4 L1475.5 1801.4 L1478.1 1799.9 L1480.8 1800.6 L1483.4 1800.8 L1486.0 1800.3 L1488.6 1801.1 L1491.3 1823.6 L1493.9 1796.9 L1496.5 1796.1 L1499.1 1795.1 L1501.8 1795.7 L1504.4 1797.3 L1507.0 1796.2 L1509.7 1796.0 L1512.3 1816.6 L1514.9 1796.0 L1517.5 1798.8 L1520.2 1811.3 L1522.8 1807.0 L1525.4 1806.2 L1528.0 1814.3 L1530.7 1805.7 L1533.3 1801.5 L1535.9 1803.7 L1538.5 1803.7 L1541.2 1803.7 L1543.8 1817.0 L1546.4 1806.1 L1549.1 1803.9 L1551.7 1813.5 L1554.3 1812.8 L1556.9 1809.7 L1559.6 1808.5 L1562.2 1809.4 L1564.8 1807.6 L1567.4 1819.2 L1570.1 1803.4 L1572.7 1803.4 L1575.3 1800.2 L1578.0 1817.3 L1580.6 1803.4 L1583.2 1798.4 L1585.8 1801.6 L1588.5 1798.5 L1591.1 1810.2 L1593.7 1804.0 L1596.3 1808.2 L1599.0 1803.6 L1601.6 1818.3 L1604.2 1802.8 L1606.8 1802.3 L1609.5 1813.0 L1612.1 1800.9 L1614.7 1802.2 L1617.4 1816.3 L1620.0 1807.5 L1622.6 1806.0 L1625.2 1806.3 L1627.9 1803.6 L1630.5 1803.7 L1633.1 1821.9 L1635.7 1800.0 L1638.4 1800.4 L1641.0 1808.4 L1643.6 1792.3 L1646.2 1792.2 L1648.9 1813.3 L1651.5 1806.1 L1654.1 1803.8 L1656.8 1799.7 L1659.4 1799.4 L1662.0 1797.5 L1664.6 1812.5 L1667.3 1799.2 L1669.9 1797.7 L1672.5 1793.8 L1675.1 1796.9 L1677.8 1794.9 L1680.4 1810.7 L1683.0 1808.3 L1685.6 1804.0 L1688.3 1801.0 L1690.9 1800.8 L1693.5 1799.5 L1696.2 1815.3 L1698.8 1794.9 L1701.4 1793.4 L1704.0 1788.1 L1706.7 1805.9 L1709.3 1786.9 L1711.9 1781.4 L1714.5 1806.5 L1717.2 1795.7 L1719.8 1791.4 L1722.4 1790.0 L1725.0 1790.8 L1727.7 1790.4 L1730.3 1801.3 L1732.9 1786.9 L1735.6 1781.7 L1738.2 1799.9 L1740.8 1776.2 L1743.4 1772.9 L1746.1 1772.5 L1748.7 1773.1 L1751.3 1772.5 L1753.9 1787.5 L1756.6 1778.5 L1759.2 1773.2 L1761.8 1771.1 L1764.4 1768.4 L1767.1 1768.2 L1769.7 1789.2 L1772.3 1781.1 L1775.0 1780.3 L1777.6 1775.3 L1780.2 1773.8 L1782.8 1776.0 L1785.5 1793.6 L1788.1 1773.1 L1790.7 1770.3 L1793.3 1786.7 L1796.0 1767.6 L1798.6 1767.0 L1801.2 1766.5 L1803.8 1762.9 L1806.5 1764.6 L1809.1 1779.8 L1811.7 1775.0 L1814.4 1774.4 L1817.0 1794.8 L1819.6 1777.4 L1822.2 1774.2 L1824.9 1795.0 L1827.5 1765.9 L1830.1 1759.7 L1832.7 1759.5 L1835.4 1760.7 L1838.0 1790.1 L1840.6 1767.6 L1843.3 1765.0 L1845.9 1777.9 L1848.5 1770.8 L1851.1 1770.3 L1853.8 1768.8 L1856.4 1767.8 L1859.0 1791.0 L1861.6 1779.7 L1864.3 1780.1 L1866.9 1786.6 L1869.5 1767.1 L1872.1 1762.1 L1874.8 1756.7 L1877.4 1777.9 L1880.0 1771.7 L1882.7 1769.4 L1885.3 1766.9 L1887.9 1766.3 L1890.5 1789.8 L1893.2 1768.0 L1895.8 1773.6 L1898.4 1767.5 L1901.0 1778.3 L1903.7 1767.7 L1906.3 1767.7 L1908.9 1760.8 L1911.5 1787.3 L1914.2 1770.2 L1916.8 1772.8 L1919.4 1765.1 L1922.1 1785.2 L1924.7 1775.7 L1927.3 1774.4 L1929.9 1772.8 L1932.6 1773.0 L1935.2 1791.8 L1937.8 1770.2 L1940.4 1766.8 L1943.1 1764.5 L1945.7 1777.8 L1948.3 1761.8 L1950.9 1759.7 L1953.6 1780.3 L1956.2 1769.3 L1956.2 1880.4 L1199.7 1880.4Z" fill="#e9626e"/><path d="M1199.7 1842.6 L1202.3 1798.7 L1205.0 1797.8 L1207.6 1795.7 L1210.2 1795.2 L1212.8 1796.3 L1215.5 1796.0 L1218.1 1796.1 L1220.7 1815.2 L1223.3 1800.1 L1226.0 1792.0 L1228.6 1792.7 L1231.2 1794.8 L1233.8 1791.9 L1236.5 1793.5 L1239.1 1792.5 L1241.7 1792.6 L1244.4 1813.3 L1247.0 1786.7 L1249.6 1784.2 L1252.2 1781.2 L1254.9 1783.9 L1257.5 1780.4 L1260.1 1783.1 L1262.7 1782.8 L1265.4 1782.0 L1268.0 1779.0 L1270.6 1808.0 L1273.2 1790.0 L1275.9 1787.3 L1278.5 1786.8 L1281.1 1789.6 L1283.8 1786.0 L1286.4 1808.7 L1289.0 1792.1 L1291.6 1782.8 L1294.3 1783.3 L1296.9 1782.9 L1299.5 1784.2 L1302.1 1788.2 L1304.8 1786.1 L1307.4 1805.9 L1310.0 1791.3 L1312.6 1785.4 L1315.3 1788.2 L1317.9 1786.3 L1320.5 1788.2 L1323.2 1785.7 L1325.8 1813.4 L1328.4 1793.2 L1331.0 1793.9 L1333.7 1791.4 L1336.3 1791.5 L1338.9 1789.1 L1341.5 1813.3 L1344.2 1797.9 L1346.8 1796.0 L1349.4 1794.2 L1352.1 1794.4 L1354.7 1791.4 L1357.3 1793.2 L1359.9 1795.3 L1362.6 1793.5 L1365.2 1811.9 L1367.8 1802.3 L1370.4 1803.1 L1373.1 1800.9 L1375.7 1802.1 L1378.3 1801.9 L1380.9 1800.4 L1383.6 1802.4 L1386.2 1798.9 L1388.8 1822.8 L1391.5 1801.1 L1394.1 1797.2 L1396.7 1795.0 L1399.3 1794.1 L1402.0 1799.1 L1404.6 1798.9 L1407.2 1798.4 L1409.8 1796.3 L1412.5 1797.1 L1415.1 1820.9 L1417.7 1804.0 L1420.3 1801.7 L1423.0 1800.3 L1425.6 1800.0 L1428.2 1800.8 L1430.9 1799.3 L1433.5 1800.5 L1436.1 1802.1 L1438.7 1819.4 L1441.4 1803.9 L1444.0 1799.6 L1446.6 1799.1 L1449.2 1799.0 L1451.9 1799.1 L1454.5 1800.8 L1457.1 1817.8 L1459.7 1806.3 L1462.4 1804.2 L1465.0 1804.8 L1467.6 1805.1 L1470.3 1806.4 L1472.9 1826.0 L1475.5 1811.1 L1478.1 1809.5 L1480.8 1809.5 L1483.4 1809.5 L1486.0 1809.6 L1488.6 1810.7 L1491.3 1831.8 L1493.9 1806.8 L1496.5 1806.4 L1499.1 1805.4 L1501.8 1805.1 L1504.4 1807.1 L1507.0 1806.0 L1509.7 1806.6 L1512.3 1825.0 L1514.9 1806.5 L1517.5 1808.9 L1520.2 1821.4 L1522.8 1816.3 L1525.4 1815.5 L1528.0 1822.9 L1530.7 1815.2 L1533.3 1812.3 L1535.9 1813.1 L1538.5 1813.0 L1541.2 1813.3 L1543.8 1825.9 L1546.4 1815.3 L1549.1 1814.1 L1551.7 1822.8 L1554.3 1822.0 L1556.9 1818.9 L1559.6 1817.6 L1562.2 1818.7 L1564.8 1816.8 L1567.4 1828.3 L1570.1 1814.2 L1572.7 1813.2 L1575.3 1810.4 L1578.0 1825.5 L1580.6 1813.1 L1583.2 1808.7 L1585.8 1812.0 L1588.5 1809.0 L1591.1 1820.0 L1593.7 1813.8 L1596.3 1817.7 L1599.0 1814.2 L1601.6 1826.3 L1604.2 1812.3 L1606.8 1812.0 L1609.5 1821.7 L1612.1 1810.3 L1614.7 1811.7 L1617.4 1824.4 L1620.0 1816.5 L1622.6 1815.1 L1625.2 1815.1 L1627.9 1812.4 L1630.5 1812.0 L1633.1 1829.0 L1635.7 1808.7 L1638.4 1809.4 L1641.0 1816.5 L1643.6 1801.7 L1646.2 1801.7 L1648.9 1821.6 L1651.5 1814.3 L1654.1 1812.9 L1656.8 1808.9 L1659.4 1809.2 L1662.0 1806.9 L1664.6 1820.8 L1667.3 1808.4 L1669.9 1807.2 L1672.5 1802.7 L1675.1 1806.3 L1677.8 1804.6 L1680.4 1819.8 L1683.0 1816.9 L1685.6 1812.9 L1688.3 1810.8 L1690.9 1809.5 L1693.5 1808.9 L1696.2 1823.1 L1698.8 1804.1 L1701.4 1803.0 L1704.0 1798.0 L1706.7 1814.1 L1709.3 1796.0 L1711.9 1791.8 L1714.5 1814.9 L1717.2 1804.7 L1719.8 1800.7 L1722.4 1799.4 L1725.0 1799.6 L1727.7 1799.4 L1730.3 1809.3 L1732.9 1796.5 L1735.6 1791.4 L1738.2 1809.0 L1740.8 1787.8 L1743.4 1784.3 L1746.1 1784.0 L1748.7 1783.9 L1751.3 1784.7 L1753.9 1799.2 L1756.6 1789.8 L1759.2 1785.4 L1761.8 1782.8 L1764.4 1780.6 L1767.1 1780.1 L1769.7 1799.2 L1772.3 1792.1 L1775.0 1790.8 L1777.6 1787.5 L1780.2 1785.8 L1782.8 1787.4 L1785.5 1804.0 L1788.1 1784.6 L1790.7 1782.1 L1793.3 1797.4 L1796.0 1779.1 L1798.6 1778.6 L1801.2 1777.5 L1803.8 1774.3 L1806.5 1776.2 L1809.1 1790.8 L1811.7 1786.1 L1814.4 1786.8 L1817.0 1804.8 L1819.6 1788.6 L1822.2 1786.0 L1824.9 1805.7 L1827.5 1778.9 L1830.1 1772.6 L1832.7 1771.5 L1835.4 1772.9 L1838.0 1801.2 L1840.6 1779.6 L1843.3 1777.4 L1845.9 1789.1 L1848.5 1783.2 L1851.1 1782.8 L1853.8 1781.2 L1856.4 1779.7 L1859.0 1800.8 L1861.6 1790.1 L1864.3 1791.4 L1866.9 1797.6 L1869.5 1777.5 L1872.1 1774.1 L1874.8 1770.0 L1877.4 1789.8 L1880.0 1783.4 L1882.7 1782.1 L1885.3 1779.5 L1887.9 1778.9 L1890.5 1801.6 L1893.2 1781.3 L1895.8 1786.0 L1898.4 1780.1 L1901.0 1789.9 L1903.7 1780.1 L1906.3 1782.3 L1908.9 1776.2 L1911.5 1799.6 L1914.2 1784.5 L1916.8 1785.9 L1919.4 1778.9 L1922.1 1797.9 L1924.7 1788.8 L1927.3 1787.5 L1929.9 1784.9 L1932.6 1785.2 L1935.2 1803.5 L1937.8 1783.2 L1940.4 1780.2 L1943.1 1777.7 L1945.7 1790.3 L1948.3 1775.3 L1950.9 1773.6 L1953.6 1792.5 L1956.2 1782.1 L1956.2 1880.4 L1199.7 1880.4Z" fill="#b85586"/><path d="M1199.7 1851.6 L1202.3 1817.2 L1205.0 1814.6 L1207.6 1813.7 L1210.2 1814.5 L1212.8 1814.7 L1215.5 1813.2 L1218.1 1813.5 L1220.7 1829.1 L1223.3 1816.7 L1226.0 1811.3 L1228.6 1810.5 L1231.2 1811.6 L1233.8 1809.0 L1236.5 1810.9 L1239.1 1809.9 L1241.7 1809.7 L1244.4 1827.7 L1247.0 1804.7 L1249.6 1803.3 L1252.2 1798.6 L1254.9 1801.0 L1257.5 1799.1 L1260.1 1799.3 L1262.7 1799.8 L1265.4 1798.9 L1268.0 1796.5 L1270.6 1822.5 L1273.2 1805.8 L1275.9 1804.4 L1278.5 1802.6 L1281.1 1804.9 L1283.8 1801.3 L1286.4 1823.8 L1289.0 1807.3 L1291.6 1800.2 L1294.3 1801.0 L1296.9 1800.8 L1299.5 1801.2 L1302.1 1804.6 L1304.8 1803.2 L1307.4 1820.4 L1310.0 1806.8 L1312.6 1803.4 L1315.3 1804.4 L1317.9 1804.8 L1320.5 1805.5 L1323.2 1802.4 L1325.8 1827.7 L1328.4 1810.5 L1331.0 1809.2 L1333.7 1807.1 L1336.3 1807.1 L1338.9 1805.8 L1341.5 1827.6 L1344.2 1813.5 L1346.8 1811.2 L1349.4 1809.6 L1352.1 1811.1 L1354.7 1807.9 L1357.3 1809.0 L1359.9 1809.7 L1362.6 1809.5 L1365.2 1825.6 L1367.8 1816.8 L1370.4 1818.7 L1373.1 1815.9 L1375.7 1815.7 L1378.3 1815.5 L1380.9 1815.4 L1383.6 1816.6 L1386.2 1813.6 L1388.8 1834.6 L1391.5 1814.4 L1394.1 1811.5 L1396.7 1810.3 L1399.3 1808.6 L1402.0 1812.3 L1404.6 1812.5 L1407.2 1811.8 L1409.8 1810.3 L1412.5 1811.6 L1415.1 1833.6 L1417.7 1817.5 L1420.3 1814.9 L1423.0 1814.0 L1425.6 1813.6 L1428.2 1814.2 L1430.9 1813.2 L1433.5 1814.1 L1436.1 1814.8 L1438.7 1831.6 L1441.4 1817.1 L1444.0 1812.8 L1446.6 1813.3 L1449.2 1812.4 L1451.9 1814.1 L1454.5 1814.9 L1457.1 1829.9 L1459.7 1819.0 L1462.4 1817.4 L1465.0 1818.7 L1467.6 1818.0 L1470.3 1820.3 L1472.9 1836.3 L1475.5 1823.9 L1478.1 1823.0 L1480.8 1822.8 L1483.4 1822.6 L1486.0 1823.3 L1488.6 1823.2 L1491.3 1842.1 L1493.9 1820.3 L1496.5 1820.7 L1499.1 1819.4 L1501.8 1818.7 L1504.4 1820.8 L1507.0 1819.9 L1509.7 1819.4 L1512.3 1835.2 L1514.9 1819.5 L1517.5 1821.6 L1520.2 1833.3 L1522.8 1828.3 L1525.4 1827.8 L1528.0 1835.0 L1530.7 1828.1 L1533.3 1825.5 L1535.9 1827.3 L1538.5 1825.9 L1541.2 1826.3 L1543.8 1838.5 L1546.4 1827.9 L1549.1 1826.4 L1551.7 1835.7 L1554.3 1834.8 L1556.9 1832.0 L1559.6 1830.9 L1562.2 1832.1 L1564.8 1829.6 L1567.4 1840.0 L1570.1 1827.1 L1572.7 1826.8 L1575.3 1824.5 L1578.0 1837.4 L1580.6 1827.1 L1583.2 1824.5 L1585.8 1825.3 L1588.5 1823.9 L1591.1 1833.6 L1593.7 1827.8 L1596.3 1830.4 L1599.0 1828.6 L1601.6 1838.9 L1604.2 1826.1 L1606.8 1825.6 L1609.5 1834.2 L1612.1 1824.3 L1614.7 1825.6 L1617.4 1837.2 L1620.0 1828.6 L1622.6 1827.7 L1625.2 1827.0 L1627.9 1825.0 L1630.5 1824.1 L1633.1 1838.9 L1635.7 1819.9 L1638.4 1820.9 L1641.0 1827.7 L1643.6 1814.8 L1646.2 1814.6 L1648.9 1831.7 L1651.5 1825.6 L1654.1 1824.7 L1656.8 1820.9 L1659.4 1821.4 L1662.0 1819.9 L1664.6 1832.2 L1667.3 1820.7 L1669.9 1818.8 L1672.5 1815.7 L1675.1 1818.2 L1677.8 1817.7 L1680.4 1831.7 L1683.0 1828.2 L1685.6 1825.0 L1688.3 1822.8 L1690.9 1823.0 L1693.5 1821.5 L1696.2 1833.1 L1698.8 1817.0 L1701.4 1815.9 L1704.0 1810.8 L1706.7 1825.2 L1709.3 1809.3 L1711.9 1805.4 L1714.5 1826.5 L1717.2 1816.0 L1719.8 1812.7 L1722.4 1810.7 L1725.0 1810.8 L1727.7 1811.2 L1730.3 1820.3 L1732.9 1809.2 L1735.6 1806.5 L1738.2 1821.6 L1740.8 1801.6 L1743.4 1797.7 L1746.1 1798.8 L1748.7 1798.4 L1751.3 1798.9 L1753.9 1814.4 L1756.6 1805.5 L1759.2 1801.9 L1761.8 1801.6 L1764.4 1797.4 L1767.1 1796.7 L1769.7 1814.2 L1772.3 1807.2 L1775.0 1805.5 L1777.6 1802.9 L1780.2 1802.2 L1782.8 1802.7 L1785.5 1817.0 L1788.1 1799.3 L1790.7 1797.0 L1793.3 1811.8 L1796.0 1795.2 L1798.6 1795.0 L1801.2 1794.3 L1803.8 1790.3 L1806.5 1793.0 L1809.1 1805.8 L1811.7 1802.0 L1814.4 1800.8 L1817.0 1819.4 L1819.6 1802.8 L1822.2 1800.7 L1824.9 1820.0 L1827.5 1794.8 L1830.1 1790.8 L1832.7 1788.4 L1835.4 1788.7 L1838.0 1815.6 L1840.6 1795.4 L1843.3 1794.9 L1845.9 1805.5 L1848.5 1799.4 L1851.1 1798.3 L1853.8 1797.3 L1856.4 1796.6 L1859.0 1814.8 L1861.6 1804.8 L1864.3 1807.2 L1866.9 1812.7 L1869.5 1793.7 L1872.1 1790.5 L1874.8 1785.4 L1877.4 1806.1 L1880.0 1799.5 L1882.7 1797.7 L1885.3 1795.6 L1887.9 1795.4 L1890.5 1818.2 L1893.2 1799.1 L1895.8 1802.2 L1898.4 1799.7 L1901.0 1807.9 L1903.7 1797.4 L1906.3 1798.5 L1908.9 1796.2 L1911.5 1815.6 L1914.2 1802.8 L1916.8 1803.9 L1919.4 1798.9 L1922.1 1815.6 L1924.7 1807.1 L1927.3 1805.1 L1929.9 1803.0 L1932.6 1803.6 L1935.2 1818.3 L1937.8 1802.4 L1940.4 1798.1 L1943.1 1796.5 L1945.7 1807.5 L1948.3 1794.5 L1950.9 1793.2 L1953.6 1810.9 L1956.2 1799.5 L1956.2 1880.4 L1199.7 1880.4Z" fill="#7a5088"/><path d="M1199.7 1860.6 L1202.3 1838.7 L1205.0 1836.5 L1207.6 1836.6 L1210.2 1836.6 L1212.8 1836.2 L1215.5 1834.7 L1218.1 1833.6 L1220.7 1848.5 L1223.3 1836.8 L1226.0 1833.2 L1228.6 1832.2 L1231.2 1833.0 L1233.8 1831.2 L1236.5 1831.4 L1239.1 1830.4 L1241.7 1829.7 L1244.4 1845.4 L1247.0 1827.3 L1249.6 1824.2 L1252.2 1821.4 L1254.9 1822.9 L1257.5 1821.1 L1260.1 1821.1 L1262.7 1819.7 L1265.4 1820.1 L1268.0 1819.0 L1270.6 1839.6 L1273.2 1825.6 L1275.9 1823.8 L1278.5 1823.2 L1281.1 1824.0 L1283.8 1823.2 L1286.4 1841.0 L1289.0 1825.7 L1291.6 1822.6 L1294.3 1822.5 L1296.9 1821.9 L1299.5 1822.3 L1302.1 1824.5 L1304.8 1823.4 L1307.4 1838.9 L1310.0 1827.5 L1312.6 1824.6 L1315.3 1824.9 L1317.9 1824.6 L1320.5 1825.5 L1323.2 1824.0 L1325.8 1845.7 L1328.4 1829.7 L1331.0 1828.5 L1333.7 1828.1 L1336.3 1827.6 L1338.9 1826.3 L1341.5 1843.4 L1344.2 1831.8 L1346.8 1829.7 L1349.4 1828.7 L1352.1 1828.4 L1354.7 1828.0 L1357.3 1828.0 L1359.9 1828.6 L1362.6 1827.1 L1365.2 1841.8 L1367.8 1835.1 L1370.4 1834.5 L1373.1 1833.4 L1375.7 1833.4 L1378.3 1832.1 L1380.9 1833.1 L1383.6 1833.1 L1386.2 1831.6 L1388.8 1849.2 L1391.5 1831.4 L1394.1 1830.0 L1396.7 1828.0 L1399.3 1826.8 L1402.0 1828.1 L1404.6 1828.6 L1407.2 1828.9 L1409.8 1827.6 L1412.5 1828.0 L1415.1 1847.8 L1417.7 1832.6 L1420.3 1831.2 L1423.0 1829.5 L1425.6 1830.2 L1428.2 1830.2 L1430.9 1829.1 L1433.5 1830.5 L1436.1 1832.4 L1438.7 1845.2 L1441.4 1832.7 L1444.0 1830.1 L1446.6 1829.6 L1449.2 1830.4 L1451.9 1830.8 L1454.5 1831.4 L1457.1 1844.6 L1459.7 1836.1 L1462.4 1834.0 L1465.0 1835.0 L1467.6 1834.3 L1470.3 1835.0 L1472.9 1849.5 L1475.5 1840.3 L1478.1 1839.0 L1480.8 1838.7 L1483.4 1838.6 L1486.0 1838.5 L1488.6 1839.0 L1491.3 1854.6 L1493.9 1836.6 L1496.5 1836.3 L1499.1 1835.5 L1501.8 1835.4 L1504.4 1836.8 L1507.0 1836.6 L1509.7 1836.2 L1512.3 1849.6 L1514.9 1836.9 L1517.5 1836.8 L1520.2 1846.8 L1522.8 1844.0 L1525.4 1843.8 L1528.0 1850.6 L1530.7 1844.0 L1533.3 1841.9 L1535.9 1842.4 L1538.5 1842.3 L1541.2 1842.6 L1543.8 1851.9 L1546.4 1843.0 L1549.1 1842.3 L1551.7 1850.4 L1554.3 1847.7 L1556.9 1847.3 L1559.6 1846.5 L1562.2 1847.2 L1564.8 1845.5 L1567.4 1854.3 L1570.1 1842.5 L1572.7 1843.3 L1575.3 1841.0 L1578.0 1851.4 L1580.6 1843.5 L1583.2 1842.2 L1585.8 1840.8 L1588.5 1839.5 L1591.1 1847.8 L1593.7 1845.4 L1596.3 1846.0 L1599.0 1844.6 L1601.6 1852.9 L1604.2 1841.9 L1606.8 1840.5 L1609.5 1849.0 L1612.1 1840.4 L1614.7 1839.8 L1617.4 1850.2 L1620.0 1842.8 L1622.6 1842.3 L1625.2 1841.6 L1627.9 1840.2 L1630.5 1839.3 L1633.1 1851.7 L1635.7 1835.2 L1638.4 1834.3 L1641.0 1840.4 L1643.6 1830.2 L1646.2 1829.6 L1648.9 1844.6 L1651.5 1838.1 L1654.1 1837.5 L1656.8 1835.9 L1659.4 1836.2 L1662.0 1834.6 L1664.6 1845.3 L1667.3 1834.6 L1669.9 1834.4 L1672.5 1832.3 L1675.1 1835.0 L1677.8 1833.7 L1680.4 1845.6 L1683.0 1841.9 L1685.6 1840.5 L1688.3 1838.8 L1690.9 1837.3 L1693.5 1836.4 L1696.2 1846.4 L1698.8 1831.7 L1701.4 1829.3 L1704.0 1826.1 L1706.7 1839.4 L1709.3 1823.8 L1711.9 1820.5 L1714.5 1837.8 L1717.2 1831.2 L1719.8 1827.6 L1722.4 1825.4 L1725.0 1825.3 L1727.7 1825.5 L1730.3 1834.3 L1732.9 1824.6 L1735.6 1822.6 L1738.2 1836.4 L1740.8 1819.1 L1743.4 1817.2 L1746.1 1816.1 L1748.7 1817.5 L1751.3 1817.6 L1753.9 1831.1 L1756.6 1822.6 L1759.2 1822.0 L1761.8 1820.3 L1764.4 1816.7 L1767.1 1817.0 L1769.7 1831.0 L1772.3 1825.6 L1775.0 1824.0 L1777.6 1822.3 L1780.2 1821.8 L1782.8 1820.6 L1785.5 1834.5 L1788.1 1818.1 L1790.7 1816.2 L1793.3 1828.9 L1796.0 1815.0 L1798.6 1813.1 L1801.2 1813.8 L1803.8 1811.1 L1806.5 1812.2 L1809.1 1825.4 L1811.7 1819.9 L1814.4 1819.6 L1817.0 1835.6 L1819.6 1820.7 L1822.2 1818.5 L1824.9 1836.1 L1827.5 1814.2 L1830.1 1810.0 L1832.7 1809.4 L1835.4 1810.3 L1838.0 1831.6 L1840.6 1815.6 L1843.3 1814.6 L1845.9 1824.0 L1848.5 1820.4 L1851.1 1818.4 L1853.8 1816.8 L1856.4 1816.1 L1859.0 1830.3 L1861.6 1823.8 L1864.3 1824.7 L1866.9 1830.3 L1869.5 1813.4 L1872.1 1811.4 L1874.8 1808.1 L1877.4 1825.4 L1880.0 1820.2 L1882.7 1817.6 L1885.3 1816.6 L1887.9 1817.0 L1890.5 1835.2 L1893.2 1821.9 L1895.8 1822.3 L1898.4 1819.9 L1901.0 1829.8 L1903.7 1821.5 L1906.3 1820.1 L1908.9 1818.5 L1911.5 1838.5 L1914.2 1825.0 L1916.8 1823.9 L1919.4 1820.9 L1922.1 1837.4 L1924.7 1828.9 L1927.3 1827.2 L1929.9 1825.7 L1932.6 1825.6 L1935.2 1837.4 L1937.8 1822.4 L1940.4 1820.5 L1943.1 1817.6 L1945.7 1828.0 L1948.3 1818.4 L1950.9 1816.0 L1953.6 1830.8 L1956.2 1821.0 L1956.2 1880.4 L1199.7 1880.4Z" fill="#444674"/><rect x="1199.7" y="1879.4" width="756.5" height="2" fill="#7c6b8e"/><rect x="1253.6" y="1880.4" width="2" height="10" fill="#7c6b8e"/><rect x="1379.6" y="1880.4" width="2" height="10" fill="#7c6b8e"/><rect x="1505.6" y="1880.4" width="2" height="10" fill="#7c6b8e"/><rect x="1631.6" y="1880.4" width="2" height="10" fill="#7c6b8e"/><rect x="1757.6" y="1880.4" width="2" height="10" fill="#7c6b8e"/><rect x="1883.6" y="1880.4" width="2" height="10" fill="#7c6b8e"/></svg><div class="t r" style="left:53.7px;top:417px;font-size:24px;color:#80708f;">0</div><div class="t r" style="left:30.9px;top:378px;font-size:24px;color:#80708f;letter-spacing:2.83px;">1m</div><div class="t r" style="left:30.9px;top:339px;font-size:24px;color:#80708f;letter-spacing:2.83px;">2m</div><div class="t r" style="left:30.9px;top:300px;font-size:24px;color:#80708f;letter-spacing:2.83px;">3m</div><div class="t r" style="left:30.9px;top:262px;font-size:24px;color:#80708f;letter-spacing:2.83px;">4m</div><div class="t r" style="left:30.9px;top:223px;font-size:24px;color:#80708f;letter-spacing:2.83px;">5m</div><div class="t r" style="left:30.9px;top:184px;font-size:24px;color:#80708f;letter-spacing:2.83px;">6m</div><div class="t r" style="left:30.9px;top:145px;font-size:24px;color:#80708f;letter-spacing:2.83px;">7m</div><div class="t r" style="left:94.3px;top:453px;font-size:24px;color:#80708f;letter-spacing:-0.15px;">4:00 PM</div><div class="t r" style="left:220.3px;top:453px;font-size:24px;color:#80708f;letter-spacing:-0.15px;">8:00 PM</div><div class="t r" style="left:338.1px;top:453px;font-size:24px;color:#80708f;letter-spacing:0.51px;">12:00 AM</div><div class="t r" style="left:471.6px;top:453px;font-size:24px;color:#80708f;letter-spacing:0.32px;">4:00 AM</div><div class="t r" style="left:597.6px;top:453px;font-size:24px;color:#80708f;letter-spacing:0.32px;">8:00 AM</div><div class="t r" style="left:716.6px;top:453px;font-size:24px;color:#80708f;letter-spacing:0.18px;">12:00 PM</div></section><section class="card" style="left:2030px;top:1450px;width:884px;height:512px"><div class="t ttl" style="left:32.5px;top:37px;font-size:32px;color:#2b2233;font-weight:700;letter-spacing:-0.19px;">Errors by Country</div><div class="" style="position:absolute;left:0px;top:100px;width:880px;height:2px;background:#e0dce5;"></div><div class="" style="position:absolute;left:0px;top:102px;width:880px;height:88px;background:#faf9fb;"></div><div class="" style="position:absolute;left:0px;top:190px;width:880px;height:2px;background:#e0dce5;"></div><div class="t" style="left:40.0px;top:134px;font-size:24px;color:#80708f;font-weight:700;letter-spacing:-0.75px;">GEO.COUNTRY_CODE</div><div class="t" style="left:390.0px;top:134px;font-size:24px;color:#80708f;font-weight:700;letter-spacing:-1.54px;">GEO.REGION</div><div class="t" style="left:741.0px;top:134px;font-size:24px;color:#80708f;font-weight:700;letter-spacing:-0.51px;">COUNT()</div><div class="" style="position:absolute;left:0px;top:262px;width:880px;height:2px;background:#e0dce5;"></div><div class="" style="position:absolute;left:0px;top:334px;width:880px;height:2px;background:#e0dce5;"></div><div class="" style="position:absolute;left:0px;top:406px;width:880px;height:2px;background:#e0dce5;"></div><div class="" style="position:absolute;left:0px;top:478px;width:880px;height:2px;background:#e0dce5;"></div><div class="" style="position:absolute;left:0px;top:550px;width:880px;height:2px;background:#e0dce5;"></div><div class="t r" style="left:40.0px;top:212px;font-size:28px;color:#3e3446;">AS</div><div class="t r" style="left:390.0px;top:212px;font-size:28px;color:#3e3446;letter-spacing:0.34px;">American Samoa</div><div class="t r" style="left:823.7px;top:212px;font-size:28px;color:#3e3446;">1</div><div class="t r" style="left:40.0px;top:284px;font-size:28px;color:#3e3446;">LC</div><div class="t r" style="left:390.0px;top:284px;font-size:28px;color:#3e3446;letter-spacing:0.35px;">Saint Lucia</div><div class="t r" style="left:823.7px;top:284px;font-size:28px;color:#3e3446;">1</div><div class="t r" style="left:40.0px;top:356px;font-size:28px;color:#3e3446;">VI</div><div class="t r" style="left:390.0px;top:356px;font-size:28px;color:#3e3446;letter-spacing:0.09px;">U.S. Virgin Islands</div><div class="t r" style="left:823.7px;top:356px;font-size:28px;color:#3e3446;">1</div><div class="t r" style="left:40.0px;top:428px;font-size:28px;color:#3e3446;">MF</div><div class="t r" style="left:390.0px;top:428px;font-size:28px;color:#3e3446;letter-spacing:0.55px;">Saint Martin</div><div class="t r" style="left:823.7px;top:428px;font-size:28px;color:#3e3446;">1</div></section></main><div class="edge"></div></body></html>
